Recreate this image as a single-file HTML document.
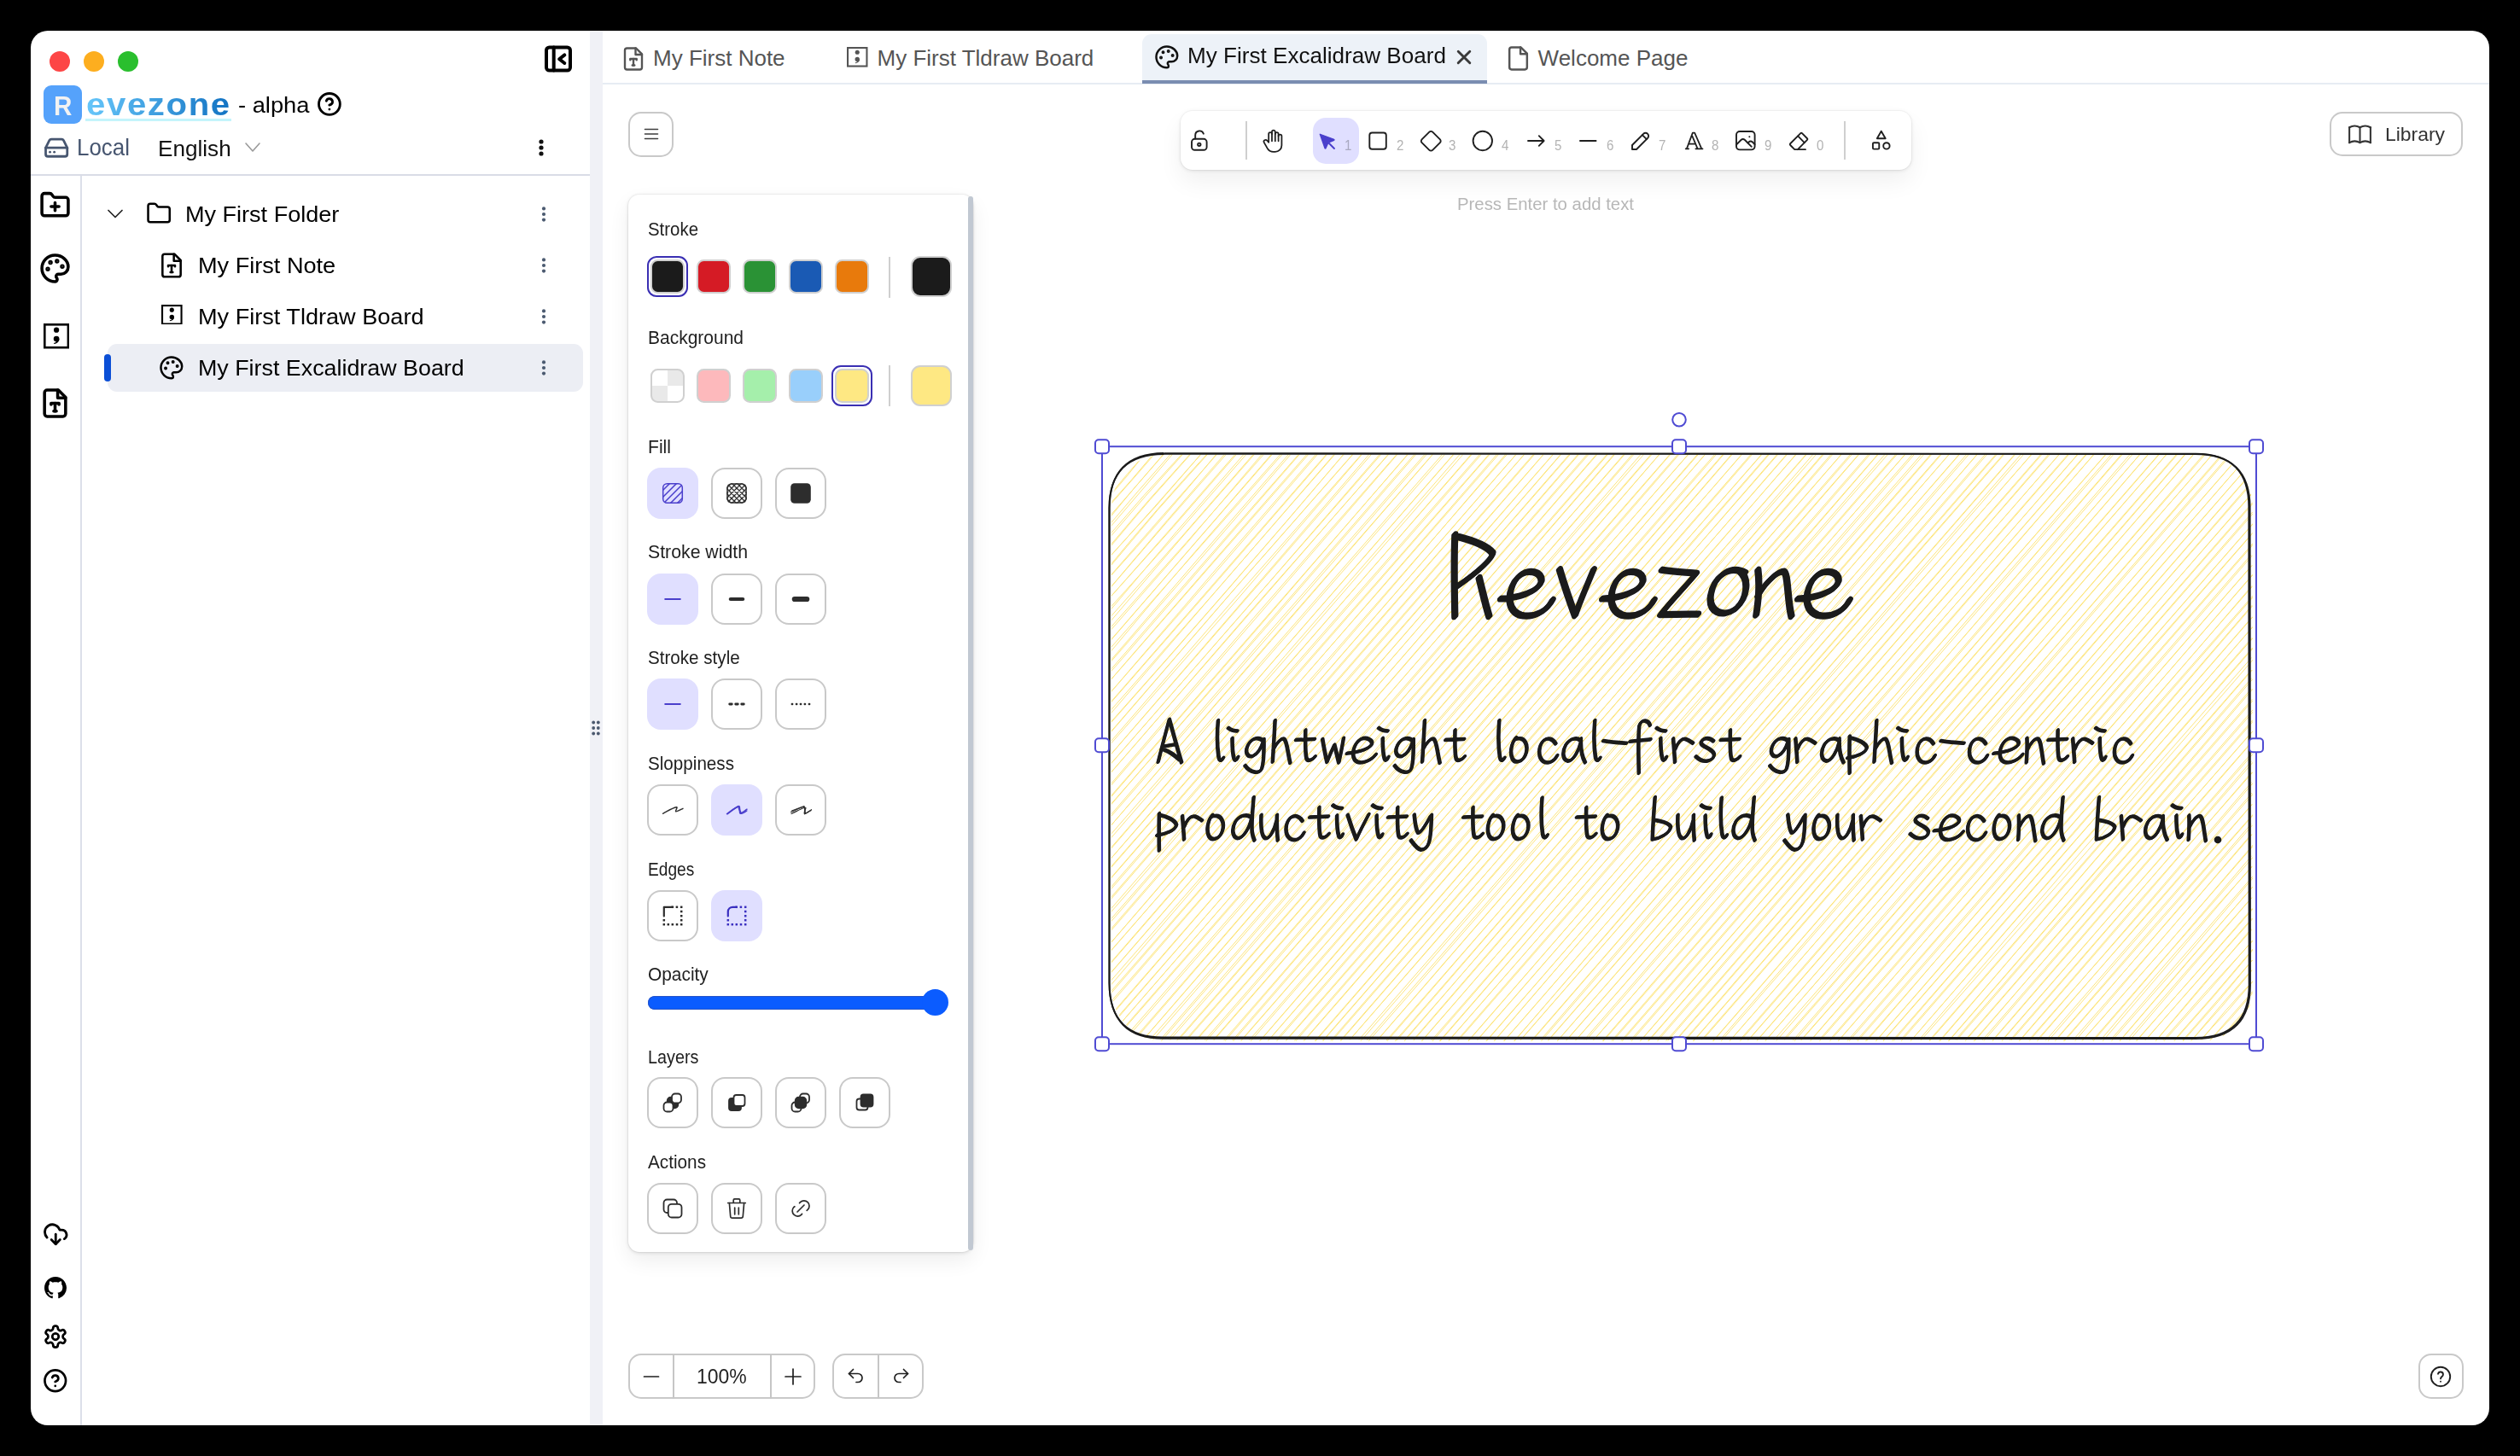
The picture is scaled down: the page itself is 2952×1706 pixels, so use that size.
<!DOCTYPE html>
<html><head><meta charset="utf-8"><title>Revezone</title>
<style>
html,body{margin:0;padding:0;background:#000;}
body{width:2952px;height:1706px;overflow:hidden;position:relative;font-family:"Liberation Sans",sans-serif;}
#win{position:absolute;left:36px;top:36px;width:2880px;height:1634px;border-radius:20px;background:#fff;overflow:hidden;}
#pg{position:absolute;left:-36px;top:-36px;width:2952px;height:1706px;}
.a{position:absolute;display:block;box-sizing:border-box;}
.t{position:absolute;white-space:pre;transform-origin:0 50%;font-family:"Liberation Sans",sans-serif;}
</style></head><body><div id="win"><div id="pg">
<div class="a" style="left:691px;top:36px;width:15px;height:1634px;background:#f0f1f6;"></div>
<div class="a" style="left:58px;top:60px;width:24px;height:24px;border-radius:50%;background:#fd4646;"></div>
<div class="a" style="left:98px;top:60px;width:24px;height:24px;border-radius:50%;background:#fdae1f;"></div>
<div class="a" style="left:138px;top:60px;width:24px;height:24px;border-radius:50%;background:#2abf2e;"></div>
<svg class="a" style="left:636px;top:51px;" width="36" height="36" viewBox="636 51 36 36" fill="none" stroke="#000" stroke-width="4" stroke-linecap="round" stroke-linejoin="round"><rect x="640" y="55.5" width="28" height="27" rx="3.5"/><path d="M648.7 55.5v27"/><path d="M661.3 64.4l-6.1 4.8l6.1 4.8"/></svg>
<div class="a" style="left:51px;top:100px;width:45px;height:45px;border-radius:9px;background:#55a2fb;"></div>
<span class="t" style="left:63.2px;top:109.4px;font-size:30.5px;line-height:30.5px;color:#f2f2f2;font-weight:bold;transform:scaleX(0.9715);">R</span>
<span class="t" id="logo" style="left:100.5px;top:103.8px;font-size:37px;line-height:37px;font-weight:bold;letter-spacing:1.5px;transform:scale(1.085,0.98);background:linear-gradient(90deg,#66c6fa 0%,#1272c2 100%);-webkit-background-clip:text;background-clip:text;color:transparent;">evezone</span>
<div class="a" style="left:100px;top:138.5px;width:171px;height:3.5px;background:#c4f4fb;"></div>
<span class="t" style="left:279.0px;top:110.3px;font-size:26px;line-height:26px;color:#000;transform:scaleX(1.0503);">- alpha</span>
<svg class="a" style="left:371.1px;top:106.8px;" width="29.8" height="29.8" viewBox="0 0 24 24" fill="none" stroke="#000" stroke-width="2.3" stroke-linecap="round" stroke-linejoin="round"><circle cx="12" cy="12" r="10"/><path d="M9.09 9a3 3 0 0 1 5.83 1c0 2-3 3-3 3"/><path d="M12 17h.01"/></svg>
<svg class="a" style="left:50.85px;top:157.85px;" width="30.3" height="30.3" viewBox="0 0 24 24" fill="none" stroke="#475670" stroke-width="2.2" stroke-linecap="round" stroke-linejoin="round"><path d="M22 12H2"/><path d="M5.45 5.11 2 12v6a2 2 0 0 0 2 2h16a2 2 0 0 0 2-2v-6l-3.45-6.89A2 2 0 0 0 16.76 4H7.24a2 2 0 0 0-1.79 1.11z"/><path d="M6 16h.01"/><path d="M10 16h.01"/></svg>
<span class="t" style="left:90.0px;top:159.2px;font-size:27.5px;line-height:27.5px;color:#475670;transform:scaleX(0.9430);">Local</span>
<span class="t" style="left:185.3px;top:161.0px;font-size:26px;line-height:26px;color:#111;transform:scaleX(1.0049);">English</span>
<svg class="a" style="left:286px;top:166px;" width="20" height="14" viewBox="0 0 20 14" fill="none" stroke="#9a9a9a" stroke-width="1.6" stroke-linecap="round" stroke-linejoin="round"><path d="M2 2l8 9l8-9"/></svg>
<svg class="a" style="left:629.4px;top:160.8px;" width="10" height="24" viewBox="-5 -12 10 24" fill="#111" stroke="none" stroke-width="0" stroke-linecap="round" stroke-linejoin="round"><circle cx="0" cy="-7" r="2.6"/><circle cx="0" cy="0" r="2.6"/><circle cx="0" cy="7" r="2.6"/></svg>
<div class="a" style="left:36px;top:204px;width:655px;height:2px;background:#d9dce6;"></div>
<div class="a" style="left:94px;top:206px;width:2px;height:1470px;background:#dcdfe9;"></div>
<svg class="a" style="left:46.0px;top:221.5px;" width="37" height="37" viewBox="0 0 24 24" fill="none" stroke="#000" stroke-width="2.3" stroke-linecap="round" stroke-linejoin="round"><path d="M4 20h16a2 2 0 0 0 2-2V8a2 2 0 0 0-2-2h-7.93a2 2 0 0 1-1.66-.9l-.82-1.2A2 2 0 0 0 7.93 3H4a2 2 0 0 0-2 2v13c0 1.1.9 2 2 2Z"/><path d="M12 10v6"/><path d="M9 13h6"/></svg>
<svg class="a" style="left:46.0px;top:296.0px;" width="37" height="37" viewBox="0 0 24 24" fill="none" stroke="#000" stroke-width="2.3" stroke-linecap="round" stroke-linejoin="round"><circle cx="13.5" cy="6.5" r=".6" fill="#000"/><circle cx="17.5" cy="10.5" r=".6" fill="#000"/><circle cx="8.5" cy="7.5" r=".6" fill="#000"/><circle cx="6.5" cy="12.5" r=".6" fill="#000"/><path d="M12 2C6.5 2 2 6.5 2 12s4.5 10 10 10c.926 0 1.648-.746 1.648-1.688 0-.437-.18-.835-.437-1.125-.29-.289-.438-.652-.438-1.125a1.64 1.64 0 0 1 1.668-1.668h1.996c3.051 0 5.555-2.503 5.555-5.554C21.965 6.012 17.461 2 12 2z"/></svg>
<svg class="a" style="left:50.5px;top:379.4px" width="30.2" height="29.5" viewBox="0 0 30.2 29.5" fill="none" stroke="#000" stroke-width="2.6" stroke-linejoin="miter"><rect x="1.3" y="1.3" width="27.599999999999998" height="26.9"/><circle cx="15.1" cy="7.73" r="3.14" fill="#000" stroke="none"/><circle cx="15.1" cy="18.05" r="3.33" fill="#000" stroke="none"/><path fill="#000" stroke="none" d="M18.43,18.05 C18.43,21.59 15.70,23.66 12.38,24.10 L11.93,22.92 C14.19,22.48 15.10,21.89 14.80,20.57 z"/></svg>
<svg class="a" style="left:46.0px;top:454.0px;" width="37" height="37" viewBox="0 0 24 24" fill="none" stroke="#000" stroke-width="2.3" stroke-linecap="round" stroke-linejoin="round"><path d="M14.5 2H6a2 2 0 0 0-2 2v16a2 2 0 0 0 2 2h12a2 2 0 0 0 2-2V7.5L14.5 2z"/><polyline points="14 2 14 8 20 8"/><path d="M9 13v-1h6v1"/><path d="M11 18h2"/><path d="M12 12v6"/></svg>
<svg class="a" style="left:49.75px;top:1430.75px;" width="30.5" height="30.5" viewBox="0 0 24 24" fill="none" stroke="#000" stroke-width="2.2" stroke-linecap="round" stroke-linejoin="round"><path d="M4 14.899A7 7 0 1 1 15.71 8h1.79a4.5 4.5 0 0 1 2.5 8.242"/><path d="M12 12v9"/><path d="m8 17 4 4 4-4"/></svg>
<svg class="a" style="left:52px;top:1496px;" width="26" height="26" viewBox="0 0 16 16" fill="none" stroke="none" stroke-width="0" stroke-linecap="round" stroke-linejoin="round"><path stroke="none" fill="#000" d="M8 0C3.58 0 0 3.58 0 8c0 3.54 2.29 6.53 5.47 7.59.4.07.55-.17.55-.38 0-.19-.01-.82-.01-1.49-2.01.37-2.53-.49-2.69-.94-.09-.23-.48-.94-.82-1.13-.28-.15-.68-.52-.01-.53.63-.01 1.08.58 1.23.82.72 1.21 1.87.87 2.33.66.07-.52.28-.87.51-1.07-1.78-.2-3.64-.89-3.64-3.95 0-.87.31-1.59.82-2.15-.08-.2-.36-1.02.08-2.12 0 0 .67-.21 2.2.82.64-.18 1.32-.27 2-.27.68 0 1.36.09 2 .27 1.53-1.04 2.2-.82 2.2-.82.44 1.1.16 1.92.08 2.12.51.56.82 1.27.82 2.15 0 3.07-1.87 3.75-3.65 3.95.29.25.54.73.54 1.48 0 1.07-.01 1.93-.01 2.2 0 .21.15.46.55.38A8.013 8.013 0 0 0 16 8c0-4.42-3.58-8-8-8z"/></svg>
<svg class="a" style="left:50.0px;top:1551.0px;" width="30" height="30" viewBox="0 0 24 24" fill="none" stroke="#000" stroke-width="2.2" stroke-linecap="round" stroke-linejoin="round"><path d="M12.22 2h-.44a2 2 0 0 0-2 2v.18a2 2 0 0 1-1 1.73l-.43.25a2 2 0 0 1-2 0l-.15-.08a2 2 0 0 0-2.73.73l-.22.38a2 2 0 0 0 .73 2.73l.15.1a2 2 0 0 1 1 1.72v.51a2 2 0 0 1-1 1.74l-.15.09a2 2 0 0 0-.73 2.73l.22.38a2 2 0 0 0 2.73.73l.15-.08a2 2 0 0 1 2 0l.43.25a2 2 0 0 1 1 1.73V20a2 2 0 0 0 2 2h.44a2 2 0 0 0 2-2v-.18a2 2 0 0 1 1-1.73l.43-.25a2 2 0 0 1 2 0l.15.08a2 2 0 0 0 2.73-.73l.22-.39a2 2 0 0 0-.73-2.73l-.15-.08a2 2 0 0 1-1-1.74v-.5a2 2 0 0 1 1-1.74l.15-.09a2 2 0 0 0 .73-2.73l-.22-.38a2 2 0 0 0-2.73-.73l-.15.08a2 2 0 0 1-2 0l-.43-.25a2 2 0 0 1-1-1.73V4a2 2 0 0 0-2-2z"/><circle cx="12" cy="12" r="3"/></svg>
<svg class="a" style="left:50.25px;top:1602.95px;" width="29.5" height="29.5" viewBox="0 0 24 24" fill="none" stroke="#000" stroke-width="2.2" stroke-linecap="round" stroke-linejoin="round"><circle cx="12" cy="12" r="10"/><path d="M9.09 9a3 3 0 0 1 5.83 1c0 2-3 3-3 3"/><path d="M12 17h.01"/></svg>
<svg class="a" style="left:124px;top:243px;" width="22" height="16" viewBox="0 0 22 16" fill="none" stroke="#222" stroke-width="1.7" stroke-linecap="round" stroke-linejoin="round"><path d="M3 3.5l8 8l8-8"/></svg>
<svg class="a" style="left:170.85px;top:235.35px;" width="30.3" height="30.3" viewBox="0 0 24 24" fill="none" stroke="#000" stroke-width="2" stroke-linecap="round" stroke-linejoin="round"><path d="M4 20h16a2 2 0 0 0 2-2V8a2 2 0 0 0-2-2h-7.93a2 2 0 0 1-1.66-.9l-.82-1.2A2 2 0 0 0 7.93 3H4a2 2 0 0 0-2 2v13c0 1.1.9 2 2 2Z"/></svg>
<span class="t" style="left:216.7px;top:238.0px;font-size:26px;line-height:26px;color:#000;transform:scaleX(1.0401);">My First Folder</span>
<svg class="a" style="left:185.0px;top:294.5px;" width="32" height="32" viewBox="0 0 24 24" fill="none" stroke="#000" stroke-width="1.9" stroke-linecap="round" stroke-linejoin="round"><path d="M14.5 2H6a2 2 0 0 0-2 2v16a2 2 0 0 0 2 2h12a2 2 0 0 0 2-2V7.5L14.5 2z"/><polyline points="14 2 14 8 20 8"/><path d="M9 13v-1h6v1"/><path d="M11 18h2"/><path d="M12 12v6"/></svg>
<span class="t" style="left:231.8px;top:298.0px;font-size:26px;line-height:26px;color:#000;transform:scaleX(1.0429);">My First Note</span>
<svg class="a" style="left:189.1px;top:356.5px" width="24.6" height="23.6" viewBox="0 0 24.6 23.6" fill="none" stroke="#000" stroke-width="2.1" stroke-linejoin="miter"><rect x="1.05" y="1.05" width="22.5" height="21.5"/><circle cx="12.3" cy="6.18" r="2.56" fill="#000" stroke="none"/><circle cx="12.3" cy="14.44" r="2.71" fill="#000" stroke="none"/><path fill="#000" stroke="none" d="M15.01,14.44 C15.01,17.28 12.79,18.93 10.09,19.28 L9.72,18.34 C11.56,17.98 12.30,17.51 12.05,16.49 z"/></svg>
<span class="t" style="left:231.8px;top:358.0px;font-size:26px;line-height:26px;color:#000;transform:scaleX(1.0422);">My First Tldraw Board</span>
<div class="a" style="left:126px;top:403px;width:557px;height:55.5px;border-radius:11px;background:#eceef4;"></div>
<div class="a" style="left:121.7px;top:415px;width:8.2px;height:31.8px;border-radius:4px;background:#0b4fd6;"></div>
<svg class="a" style="left:186.15px;top:416.15px;" width="29.7" height="29.7" viewBox="0 0 24 24" fill="none" stroke="#000" stroke-width="2" stroke-linecap="round" stroke-linejoin="round"><circle cx="13.5" cy="6.5" r=".6" fill="#000"/><circle cx="17.5" cy="10.5" r=".6" fill="#000"/><circle cx="8.5" cy="7.5" r=".6" fill="#000"/><circle cx="6.5" cy="12.5" r=".6" fill="#000"/><path d="M12 2C6.5 2 2 6.5 2 12s4.5 10 10 10c.926 0 1.648-.746 1.648-1.688 0-.437-.18-.835-.437-1.125-.29-.289-.438-.652-.438-1.125a1.64 1.64 0 0 1 1.668-1.668h1.996c3.051 0 5.555-2.503 5.555-5.554C21.965 6.012 17.461 2 12 2z"/></svg>
<span class="t" style="left:231.8px;top:418.3px;font-size:26px;line-height:26px;color:#000;transform:scaleX(1.0322);">My First Excalidraw Board</span>
<svg class="a" style="left:632px;top:239px;" width="10" height="24" viewBox="-5 -12 10 24" fill="#4b5a70" stroke="none" stroke-width="0" stroke-linecap="round" stroke-linejoin="round"><circle cx="0" cy="-6.6" r="2.1"/><circle cx="0" cy="0" r="2.1"/><circle cx="0" cy="6.6" r="2.1"/></svg>
<svg class="a" style="left:632px;top:299px;" width="10" height="24" viewBox="-5 -12 10 24" fill="#4b5a70" stroke="none" stroke-width="0" stroke-linecap="round" stroke-linejoin="round"><circle cx="0" cy="-6.6" r="2.1"/><circle cx="0" cy="0" r="2.1"/><circle cx="0" cy="6.6" r="2.1"/></svg>
<svg class="a" style="left:632px;top:359px;" width="10" height="24" viewBox="-5 -12 10 24" fill="#4b5a70" stroke="none" stroke-width="0" stroke-linecap="round" stroke-linejoin="round"><circle cx="0" cy="-6.6" r="2.1"/><circle cx="0" cy="0" r="2.1"/><circle cx="0" cy="6.6" r="2.1"/></svg>
<svg class="a" style="left:632px;top:419px;" width="10" height="24" viewBox="-5 -12 10 24" fill="#4b5a70" stroke="none" stroke-width="0" stroke-linecap="round" stroke-linejoin="round"><circle cx="0" cy="-6.6" r="2.1"/><circle cx="0" cy="0" r="2.1"/><circle cx="0" cy="6.6" r="2.1"/></svg>
<div class="a" style="left:706px;top:97px;width:2210px;height:2px;background:#e7ecf3;"></div>
<svg class="a" style="left:727.0px;top:53.7px;" width="30" height="30" viewBox="0 0 24 24" fill="none" stroke="#555" stroke-width="1.9" stroke-linecap="round" stroke-linejoin="round"><path d="M14.5 2H6a2 2 0 0 0-2 2v16a2 2 0 0 0 2 2h12a2 2 0 0 0 2-2V7.5L14.5 2z"/><polyline points="14 2 14 8 20 8"/><path d="M9 13v-1h6v1"/><path d="M11 18h2"/><path d="M12 12v6"/></svg>
<span class="t" style="left:765.0px;top:55.2px;font-size:26px;line-height:26px;color:#555;">My First Note</span>
<svg class="a" style="left:992px;top:55px" width="24.5" height="23.6" viewBox="0 0 24.5 23.6" fill="none" stroke="#555" stroke-width="2.1" stroke-linejoin="miter"><rect x="1.05" y="1.05" width="22.4" height="21.5"/><circle cx="12.25" cy="6.18" r="2.55" fill="#555" stroke="none"/><circle cx="12.25" cy="14.44" r="2.70" fill="#555" stroke="none"/><path fill="#555" stroke="none" d="M14.95,14.44 C14.95,17.28 12.74,18.93 10.04,19.28 L9.68,18.34 C11.52,17.98 12.25,17.51 12.01,16.48 z"/></svg>
<span class="t" style="left:1027.5px;top:55.2px;font-size:26px;line-height:26px;color:#555;">My First Tldraw Board</span>
<div class="a" style="left:1338px;top:40px;width:404px;height:58px;border-radius:11px 11px 0 0;background:#edf2f8;border-bottom:4px solid #7a8db1;"></div>
<svg class="a" style="left:1351.65px;top:52.15px;" width="29.7" height="29.7" viewBox="0 0 24 24" fill="none" stroke="#111" stroke-width="2" stroke-linecap="round" stroke-linejoin="round"><circle cx="13.5" cy="6.5" r=".6" fill="#000"/><circle cx="17.5" cy="10.5" r=".6" fill="#000"/><circle cx="8.5" cy="7.5" r=".6" fill="#000"/><circle cx="6.5" cy="12.5" r=".6" fill="#000"/><path d="M12 2C6.5 2 2 6.5 2 12s4.5 10 10 10c.926 0 1.648-.746 1.648-1.688 0-.437-.18-.835-.437-1.125-.29-.289-.438-.652-.438-1.125a1.64 1.64 0 0 1 1.668-1.668h1.996c3.051 0 5.555-2.503 5.555-5.554C21.965 6.012 17.461 2 12 2z"/></svg>
<span class="t" style="left:1390.5px;top:52.4px;font-size:26px;line-height:26px;color:#111;transform:scaleX(1.0034);">My First Excalidraw Board</span>
<svg class="a" style="left:1705px;top:57px;" width="20" height="20" viewBox="0 0 20 20" fill="none" stroke="#3a3a3a" stroke-width="2.9" stroke-linecap="round" stroke-linejoin="round"><path d="M3.200 3.200l13.600 13.600M16.800 3.200l-13.600 13.600"/></svg>
<svg class="a" style="left:1762.5px;top:53.3px;" width="31" height="31" viewBox="0 0 24 24" fill="none" stroke="#555" stroke-width="1.9" stroke-linecap="round" stroke-linejoin="round"><path d="M14.5 2H6a2 2 0 0 0-2 2v16a2 2 0 0 0 2 2h12a2 2 0 0 0 2-2V7.5L14.5 2z"/><polyline points="14 2 14 8 20 8"/></svg>
<span class="t" style="left:1801.6px;top:55.2px;font-size:26px;line-height:26px;color:#555;">Welcome Page</span>
<div class="a" style="left:736.4px;top:130.5px;width:53px;height:53px;border:2px solid #c9c9c9;background:#fff;border-radius:15px;"></div>
<svg class="a" style="left:753px;top:147px;" width="20" height="20" viewBox="0 0 20 20" fill="none" stroke="#3d3d3d" stroke-width="1.6" stroke-linecap="round" stroke-linejoin="round"><path d="M2.5 4.5h15M2.5 10h15M2.5 15.5h15"/></svg>
<div class="a" style="left:2728.7px;top:130.6px;width:156.5px;height:52.5px;border:2px solid #c9c9c9;background:#fff;border-radius:15px;"></div>
<svg class="a" style="left:2747.7px;top:140.5px;" width="33" height="33" viewBox="0 0 24 24" fill="none" stroke="#333" stroke-width="1.5" stroke-linecap="round" stroke-linejoin="round"><path d="M3 19a9 9 0 0 1 9 0a9 9 0 0 1 9 0"/><path d="M3 6a9 9 0 0 1 9 0a9 9 0 0 1 9 0"/><path d="M3 6v13"/><path d="M12 6v13"/><path d="M21 6v13"/></svg>
<span class="t" style="left:2794.0px;top:147.6px;font-size:21.5px;line-height:21.5px;color:#333;transform:scaleX(1.0651);">Library</span>
<div class="a" style="left:1383px;top:130px;width:856px;height:69px;border-radius:14px;background:#fff;box-shadow:0 0 0 1px rgba(0,0,0,.03),0 1px 4px rgba(0,0,0,.10),0 14px 28px rgba(0,0,0,.06);"></div>
<div class="a" style="left:1459.2px;top:142px;width:1.8px;height:44.5px;background:#cfcfcf;"></div>
<div class="a" style="left:2160.3px;top:142px;width:1.8px;height:44.5px;background:#cfcfcf;"></div>
<div class="a" style="left:1538px;top:138px;width:54px;height:54px;border-radius:15px;background:#e0dfff;"></div>
<span class="t" style="left:1574.8px;top:161.7px;font-size:16.5px;line-height:16.5px;color:#a9a9c0;transform:scaleX(0.9153);">1</span>
<span class="t" style="left:1635.8px;top:161.7px;font-size:16.5px;line-height:16.5px;color:#b3b3b3;transform:scaleX(0.9153);">2</span>
<span class="t" style="left:1697.4px;top:161.7px;font-size:16.5px;line-height:16.5px;color:#b3b3b3;transform:scaleX(0.9153);">3</span>
<span class="t" style="left:1759.1px;top:161.7px;font-size:16.5px;line-height:16.5px;color:#b3b3b3;transform:scaleX(0.9153);">4</span>
<span class="t" style="left:1820.6px;top:161.7px;font-size:16.5px;line-height:16.5px;color:#b3b3b3;transform:scaleX(0.9153);">5</span>
<span class="t" style="left:1881.8px;top:161.7px;font-size:16.5px;line-height:16.5px;color:#b3b3b3;transform:scaleX(0.9153);">6</span>
<span class="t" style="left:1943.4px;top:161.7px;font-size:16.5px;line-height:16.5px;color:#b3b3b3;transform:scaleX(0.9153);">7</span>
<span class="t" style="left:2004.8px;top:161.7px;font-size:16.5px;line-height:16.5px;color:#b3b3b3;transform:scaleX(0.9153);">8</span>
<span class="t" style="left:2066.7px;top:161.7px;font-size:16.5px;line-height:16.5px;color:#b3b3b3;transform:scaleX(0.9153);">9</span>
<span class="t" style="left:2127.8px;top:161.7px;font-size:16.5px;line-height:16.5px;color:#b3b3b3;transform:scaleX(0.9153);">0</span>
<span class="t" style="left:1707.0px;top:229.4px;font-size:20.5px;line-height:20.5px;color:#b7b7b7;transform:scaleX(0.9927);">Press Enter to add text</span>
<div class="a" style="left:736.4px;top:1586.3px;width:219px;height:53px;border:2px solid #c9c9c9;background:#fff;border-radius:15px;"></div>
<div class="a" style="left:788.2px;top:1587px;width:1.6px;height:52px;background:#c6c6c6;"></div>
<div class="a" style="left:902.2px;top:1587px;width:1.6px;height:52px;background:#c6c6c6;"></div>
<svg class="a" style="left:752px;top:1603px;" width="22" height="20" viewBox="0 0 22 20" fill="none" stroke="#1f1f1f" stroke-width="1.7" stroke-linecap="round" stroke-linejoin="round"><path d="M2.5 10h17"/></svg>
<svg class="a" style="left:918px;top:1603px;" width="22" height="20" viewBox="0 0 22 20" fill="none" stroke="#1f1f1f" stroke-width="1.7" stroke-linecap="round" stroke-linejoin="round"><path d="M2 10h18M11 1v18"/></svg>
<span class="t" style="left:816.3px;top:1602.1px;font-size:23.5px;line-height:23.5px;color:#1f1f1f;transform:scaleX(0.9766);">100%</span>
<div class="a" style="left:974.5px;top:1586.3px;width:107px;height:53px;border:2px solid #c9c9c9;background:#fff;border-radius:15px;"></div>
<div class="a" style="left:1028.1px;top:1587px;width:1.6px;height:52px;background:#c6c6c6;"></div>
<svg class="a" style="left:991px;top:1600px;" width="24" height="24" viewBox="0 0 24 24" fill="none" stroke="#1f1f1f" stroke-width="1.7" stroke-linecap="round" stroke-linejoin="round"><path d="M8.5 4.5l-5 5l5 5"/><path d="M3.5 9.500h10.5a5 5 0 0 1 0 10h-2"/></svg>
<svg class="a" style="left:1043px;top:1600px;" width="24" height="24" viewBox="0 0 24 24" fill="none" stroke="#1f1f1f" stroke-width="1.7" stroke-linecap="round" stroke-linejoin="round"><path d="M15.5 4.5l5 5l-5 5"/><path d="M20.5 9.500h-10.500a5 5 0 0 0 0 10h2"/></svg>
<div class="a" style="left:2832.5px;top:1586.3px;width:53px;height:53px;border:2px solid #c9c9c9;background:#fff;border-radius:15px;"></div>
<svg class="a" style="left:2845px;top:1599px;" width="28" height="28" viewBox="0 0 28 28" fill="none" stroke="#1f1f1f" stroke-width="1.9" stroke-linecap="round" stroke-linejoin="round"><circle cx="14" cy="14" r="11.2"/><path d="M11 10.800a3 3 0 0 1 5.900 1c0 2.100-2.900 2.400-2.900 4.600"/><path d="M14 19.600v.1"/></svg>
<svg class="a" style="left:1392px;top:150px;" width="26" height="30" viewBox="1392 150 26 30" fill="none" stroke="#1f1f1f" stroke-width="1.9" stroke-linecap="round" stroke-linejoin="round"><rect x="1396" y="162.800" width="17.600" height="13" rx="3.600"/><circle cx="1404.800" cy="169.300" r="1.700"/><path d="M1400.200 162.500v-4.200a5 5 0 0 1 9.700 -1.600"/></svg>
<svg class="a" style="left:1475.75px;top:149.75px;" width="30.5" height="30.5" viewBox="0 0 24 24" fill="none" stroke="#1f1f1f" stroke-width="1.4" stroke-linecap="round" stroke-linejoin="round"><path d="M8 13v-7.500a1.500 1.500 0 0 1 3 0v6.500"/><path d="M11 5.500v-2a1.500 1.500 0 1 1 3 0v8.500"/><path d="M14 5.500a1.500 1.500 0 0 1 3 0v6.500"/><path d="M17 7.500a1.500 1.500 0 0 1 3 0v8.500a6 6 0 0 1 -6 6h-2h.208a6 6 0 0 1 -5.012 -2.700a69.740 69.740 0 0 1 -.196 -.300c-.312 -.479 -1.407 -2.388 -3.286 -5.728a1.500 1.500 0 0 1 .536 -2.022a1.867 1.867 0 0 1 2.280 .280l1.470 1.470"/></svg>
<svg class="a" style="left:1537.8px;top:148.8px;" width="30.5" height="30.5" viewBox="0 0 22 22" fill="#4a3fcc" stroke="#4a3fcc" stroke-width="1.25" stroke-linecap="round" stroke-linejoin="round"><path stroke-width="1" d="M6 6l4.153 11.793a0.365 .365 0 0 0 .331 .207a0.366 .366 0 0 0 .332 -.207l2.184 -4.793l4.787 -1.994a0.355 .355 0 0 0 .213 -.323a0.355 .355 0 0 0 -.213 -.323l-11.787 -4.360z"/><path d="M13.500 13.500l4.500 4.500" stroke-width="1.400"/></svg>
<svg class="a" style="left:1601px;top:152px;" width="26" height="26" viewBox="1601 152 26 26" fill="none" stroke="#1f1f1f" stroke-width="1.9" stroke-linecap="round" stroke-linejoin="round"><rect x="1604.300" y="155.500" width="19.500" height="19.300" rx="3"/></svg>
<svg class="a" style="left:1660.75px;top:149.75px;" width="30.5" height="30.5" viewBox="0 0 24 24" fill="none" stroke="#1f1f1f" stroke-width="1.5" stroke-linecap="round" stroke-linejoin="round"><path d="M10.500 20.400l-6.900 -6.900c-.781 -.781 -.781 -2.219 0 -3l6.900 -6.900c.781 -.781 2.219 -.781 3 0l6.900 6.900c.781 .781 .781 2.219 0 3l-6.900 6.900c-.781 .781 -2.219 .781 -3 0z"/></svg>
<svg class="a" style="left:1722px;top:150px;" width="30" height="30" viewBox="1722 150 30 30" fill="none" stroke="#1f1f1f" stroke-width="1.9" stroke-linecap="round" stroke-linejoin="round"><circle cx="1736.800" cy="165" r="11.200"/></svg>
<svg class="a" style="left:1786px;top:152px;" width="26" height="26" viewBox="1786 152 26 26" fill="none" stroke="#1f1f1f" stroke-width="1.9" stroke-linecap="round" stroke-linejoin="round"><path d="M1790 165h18.500M1802.800 159.200l5.800 5.800l-5.800 5.800"/></svg>
<svg class="a" style="left:1846px;top:152px;" width="28" height="26" viewBox="1846 152 28 26" fill="none" stroke="#1f1f1f" stroke-width="2" stroke-linecap="round" stroke-linejoin="round"><path d="M1851 165h18.500"/></svg>
<svg class="a" style="left:1907px;top:150px;" width="30" height="30" viewBox="0 0 24 24" fill="none" stroke="#1f1f1f" stroke-width="1.55" stroke-linecap="round" stroke-linejoin="round"><path d="M4 20h4l10.500 -10.500a2.828 2.828 0 1 0 -4 -4l-10.500 10.500v4"/><path d="M13.500 6.500l4 4"/></svg>
<svg class="a" style="left:1969.5px;top:151px;" width="28" height="28" viewBox="0 0 24 24" fill="none" stroke="#1f1f1f" stroke-width="1.5" stroke-linecap="round" stroke-linejoin="round"><path d="M4 20h3M14 20h7M6.900 15h6.900M10.200 6.300l5.800 13.700M5 20l6 -16h2l7 16"/></svg>
<svg class="a" style="left:2030px;top:150px;" width="30" height="30" viewBox="2030 150 30 30" fill="none" stroke="#1f1f1f" stroke-width="1.9" stroke-linecap="round" stroke-linejoin="round"><rect x="2034" y="154" width="21.600" height="21.400" rx="4"/><path d="M2049.300 160.300h.1"/><path d="M2034 169.500l5.500 -5.500c1.400 -1.300 3.100 -1.300 4.500 0l7.800 7.800"/><path d="M2047.500 167.500l1 -1c1.400 -1.300 3.100 -1.300 4.500 0l2.600 2.600"/></svg>
<svg class="a" style="left:2092.1px;top:150.7px;" width="29" height="29" viewBox="0 0 24 24" fill="none" stroke="#1f1f1f" stroke-width="1.55" stroke-linecap="round" stroke-linejoin="round"><path d="M19 20h-10.500l-4.210 -4.300a1 1 0 0 1 0 -1.410l10 -10a1 1 0 0 1 1.410 0l5 5a1 1 0 0 1 0 1.410l-9.200 9.300"/><path d="M18 13.300l-6.300 -6.300"/></svg>
<svg class="a" style="left:2189.25px;top:150.25px;" width="29.5" height="29.5" viewBox="0 0 24 24" fill="none" stroke="#1f1f1f" stroke-width="1.55" stroke-linecap="round" stroke-linejoin="round"><path d="M12 3l-4 7h8z"/><circle cx="17" cy="17" r="3"/><rect x="4" y="14" width="6" height="6" rx="1"/></svg>
<div class="a" style="left:735.7px;top:228.3px;width:404px;height:1238.5px;border-radius:13px;background:#fff;box-shadow:0 0 0 1px rgba(0,0,0,.04),0 1px 4px rgba(0,0,0,.12),0 10px 24px rgba(0,0,0,.07);overflow:hidden;"></div>
<div class="a" style="left:1133.8px;top:229.5px;width:5.8px;height:1235px;background:#c1c8d2;border-radius:3px;"></div>
<span class="t" style="left:758.5px;top:258.3px;font-size:22px;line-height:22px;color:#1f1f1f;transform:scaleX(0.9279);">Stroke</span>
<span class="t" style="left:758.5px;top:384.9px;font-size:22px;line-height:22px;color:#1f1f1f;transform:scaleX(0.9539);">Background</span>
<span class="t" style="left:758.5px;top:513.1px;font-size:22px;line-height:22px;color:#1f1f1f;transform:scaleX(0.9607);">Fill</span>
<span class="t" style="left:758.5px;top:636.3px;font-size:22px;line-height:22px;color:#1f1f1f;transform:scaleX(0.9665);">Stroke width</span>
<span class="t" style="left:758.5px;top:759.9px;font-size:22px;line-height:22px;color:#1f1f1f;transform:scaleX(0.9371);">Stroke style</span>
<span class="t" style="left:758.5px;top:884.4px;font-size:22px;line-height:22px;color:#1f1f1f;transform:scaleX(0.9384);">Sloppiness</span>
<span class="t" style="left:758.5px;top:1007.8px;font-size:22px;line-height:22px;color:#1f1f1f;transform:scaleX(0.8704);">Edges</span>
<span class="t" style="left:758.5px;top:1131.4px;font-size:22px;line-height:22px;color:#1f1f1f;transform:scaleX(0.9493);">Opacity</span>
<span class="t" style="left:758.5px;top:1227.6px;font-size:22px;line-height:22px;color:#1f1f1f;transform:scaleX(0.8995);">Layers</span>
<span class="t" style="left:758.5px;top:1351.3px;font-size:22px;line-height:22px;color:#1f1f1f;transform:scaleX(0.9425);">Actions</span>
<div class="a" style="left:758.4px;top:300.4px;width:48px;height:48px;border-radius:11px;border:2.2px solid #3a2fb3;"></div>
<div class="a" style="left:762.4px;top:304.4px;width:40px;height:40px;border-radius:8.5px;background:#1b1b1b;border:2px solid #d0d0d0;"></div>
<div class="a" style="left:816.4px;top:304.4px;width:40px;height:40px;border-radius:8.5px;background:#d51b25;border:2px solid #d0d0d0;"></div>
<div class="a" style="left:870.2px;top:304.4px;width:40px;height:40px;border-radius:8.5px;background:#2a9235;border:2px solid #d0d0d0;"></div>
<div class="a" style="left:924px;top:304.4px;width:40px;height:40px;border-radius:8.5px;background:#1a5ab4;border:2px solid #d0d0d0;"></div>
<div class="a" style="left:978px;top:304.4px;width:40px;height:40px;border-radius:8.5px;background:#e87a0c;border:2px solid #d0d0d0;"></div>
<div class="a" style="left:1041.2px;top:300.5px;width:1.6px;height:48px;background:#cfcfcf;"></div>
<div class="a" style="left:1066.6px;top:300.4px;width:48px;height:48px;border-radius:11px;background:#1b1b1b;border:2px solid #d0d0d0;"></div>
<div class="a" style="left:762.4px;top:432px;width:40px;height:40px;border-radius:8.5px;background:#fff conic-gradient(#e9e9e9 0 25%,#fff 0 50%,#e9e9e9 0 75%,#fff 0);background-size:100% 100%;border:2px solid #d0d0d0;"></div>
<div class="a" style="left:816.4px;top:432px;width:40px;height:40px;border-radius:8.5px;background:#fdb9bc;border:2px solid #d0d0d0;"></div>
<div class="a" style="left:870.2px;top:432px;width:40px;height:40px;border-radius:8.5px;background:#a5efab;border:2px solid #d0d0d0;"></div>
<div class="a" style="left:924px;top:432px;width:40px;height:40px;border-radius:8.5px;background:#99cffb;border:2px solid #d0d0d0;"></div>
<div class="a" style="left:974px;top:428px;width:48px;height:48px;border-radius:11px;border:2.2px solid #3a2fb3;"></div>
<div class="a" style="left:978px;top:432px;width:40px;height:40px;border-radius:8.5px;background:#fee883;border:2px solid #d0d0d0;"></div>
<div class="a" style="left:1041.2px;top:428px;width:1.6px;height:48px;background:#cfcfcf;"></div>
<div class="a" style="left:1066.6px;top:428px;width:48px;height:48px;border-radius:11px;background:#fee883;border:2px solid #d0d0d0;"></div>
<div class="a" style="left:758.2px;top:548px;width:60px;height:60px;border-radius:16px;background:#e0dfff;"></div>
<svg class="a" style="left:773.2px;top:563.0px;" width="30" height="30" viewBox="-15 -15 30 30" fill="none" stroke="#4a3fcc" stroke-width="1.5" stroke-linecap="round" stroke-linejoin="round"><defs><clipPath id="cph"><rect x="-11" y="-11" width="22" height="22" rx="4.500"/></clipPath></defs><rect x="-11.300" y="-11.300" width="22.600" height="22.600" rx="4.800"/><g clip-path="url(#cph)"><path d="M-20 5L5 -20M-16 9L9 -16M-12 13L13 -12M-8 17L17 -8M-4 21L21 -4"/></g></svg>
<div class="a" style="left:833.2px;top:548px;width:60px;height:60px;border:2px solid #c9c9c9;background:#fff;border-radius:16px;"></div>
<svg class="a" style="left:848.2px;top:563.0px;" width="30" height="30" viewBox="-15 -15 30 30" fill="none" stroke="#2d2d2d" stroke-width="1.5" stroke-linecap="round" stroke-linejoin="round"><defs><clipPath id="cpx"><rect x="-11.800" y="-11.800" width="23.600" height="23.600" rx="5.500"/></clipPath></defs><rect x="-11" y="-11" width="22" height="22" rx="5"/><g clip-path="url(#cpx)"><path d="M-24.0 6.0L6.0 -24.0M-24.0 -6.0L6.0 24.0M-21.0 9.0L9.0 -21.0M-21.0 -9.0L9.0 21.0M-18.0 12.0L12.0 -18.0M-18.0 -12.0L12.0 18.0M-15.0 15.0L15.0 -15.0M-15.0 -15.0L15.0 15.0M-12.0 18.0L18.0 -12.0M-12.0 -18.0L18.0 12.0M-9.0 21.0L21.0 -9.0M-9.0 -21.0L21.0 9.0M-6.0 24.0L24.0 -6.0M-6.0 -24.0L24.0 6.0" stroke-width="1.3"/></g></svg>
<div class="a" style="left:908.2px;top:548px;width:60px;height:60px;border:2px solid #c9c9c9;background:#fff;border-radius:16px;"></div>
<svg class="a" style="left:923.2px;top:563.0px;" width="30" height="30" viewBox="-15 -15 30 30" fill="#2d2d2d" stroke="none" stroke-width="0" stroke-linecap="round" stroke-linejoin="round"><rect x="-11.800" y="-11.800" width="23.600" height="23.600" rx="4.500"/></svg>
<div class="a" style="left:758.2px;top:672px;width:60px;height:60px;border-radius:16px;background:#e0dfff;"></div>
<svg class="a" style="left:773.2px;top:687.0px;" width="30" height="30" viewBox="-15 -15 30 30" fill="none" stroke="#4a3fcc" stroke-width="2" stroke-linecap="round" stroke-linejoin="round"><path d="M-8.800 0h17.600"/></svg>
<div class="a" style="left:833.2px;top:672px;width:60px;height:60px;border:2px solid #c9c9c9;background:#fff;border-radius:16px;"></div>
<svg class="a" style="left:848.2px;top:687.0px;" width="30" height="30" viewBox="-15 -15 30 30" fill="none" stroke="#2d2d2d" stroke-width="4.2" stroke-linecap="round" stroke-linejoin="round"><path d="M-7.200 0h14.400"/></svg>
<div class="a" style="left:908.2px;top:672px;width:60px;height:60px;border:2px solid #c9c9c9;background:#fff;border-radius:16px;"></div>
<svg class="a" style="left:923.2px;top:687.0px;" width="30" height="30" viewBox="-15 -15 30 30" fill="none" stroke="#2d2d2d" stroke-width="6.2" stroke-linecap="round" stroke-linejoin="round"><path d="M-7.200 0h14.400"/></svg>
<div class="a" style="left:758.2px;top:795px;width:60px;height:60px;border-radius:16px;background:#e0dfff;"></div>
<svg class="a" style="left:773.2px;top:810.0px;" width="30" height="30" viewBox="-15 -15 30 30" fill="none" stroke="#4a3fcc" stroke-width="2" stroke-linecap="round" stroke-linejoin="round"><path d="M-8.800 0h17.600"/></svg>
<div class="a" style="left:833.2px;top:795px;width:60px;height:60px;border:2px solid #c9c9c9;background:#fff;border-radius:16px;"></div>
<svg class="a" style="left:848.2px;top:810.0px;" width="30" height="30" viewBox="-15 -15 30 30" fill="none" stroke="#2d2d2d" stroke-width="2.8" stroke-linecap="round" stroke-linejoin="round"><path d="M-8.300 0h2.600M-1.300 0h2.600M5.700 0h2.600"/></svg>
<div class="a" style="left:908.2px;top:795px;width:60px;height:60px;border:2px solid #c9c9c9;background:#fff;border-radius:16px;"></div>
<svg class="a" style="left:923.2px;top:810.0px;" width="30" height="30" viewBox="-15 -15 30 30" fill="none" stroke="#2d2d2d" stroke-width="2.4" stroke-linecap="round" stroke-linejoin="round"><path d="M-10.200 0h.4M-5.100 0h.4M-.2 0h.4M4.700 0h.4M9.800 0h.4"/></svg>
<div class="a" style="left:758.2px;top:919px;width:60px;height:60px;border:2px solid #c9c9c9;background:#fff;border-radius:16px;"></div>
<svg class="a" style="left:773.2px;top:934.0px;" width="30" height="30" viewBox="-15 -15 30 30" fill="none" stroke="#2d2d2d" stroke-width="1.4" stroke-linecap="round" stroke-linejoin="round"><path d="M-11.500 4.300C-6 1.500 -1 -2.300 4.500 -3.300C6.500 -3.600 3 0.800 3.500 1.700C4.500 2.700 9 -0.200 12 -1.700"/></svg>
<div class="a" style="left:833.2px;top:919px;width:60px;height:60px;border-radius:16px;background:#e0dfff;"></div>
<svg class="a" style="left:848.2px;top:934.0px;" width="30" height="30" viewBox="-15 -15 30 30" fill="none" stroke="#4a3fcc" stroke-width="1.5" stroke-linecap="round" stroke-linejoin="round"><path d="M-11.500 4.500C-7 1.500 -3 -1.800 1.500 -4C4 -5 3.500 3 4.500 3.500C6 4.500 10 0.500 12 -0.800"/><path d="M-11 4.800C-6 1 -2 -2.500 2.500 -4.500C4.500 -4.500 2.500 2 4 4C6 5 10.500 2 11.800 1"/><path d="M2 -3.500C3 0 3.500 2 5.500 3.500"/></svg>
<div class="a" style="left:908.2px;top:919px;width:60px;height:60px;border:2px solid #c9c9c9;background:#fff;border-radius:16px;"></div>
<svg class="a" style="left:923.2px;top:934.0px;" width="30" height="30" viewBox="-15 -15 30 30" fill="none" stroke="#2d2d2d" stroke-width="1.2" stroke-linecap="round" stroke-linejoin="round"><path d="M-11.500 2.500C-6 0.500 -1 -3 3.500 -3.500C6.500 -3.500 3 3 5.500 4C7 4 10 1.500 12.500 -0.300"/><path d="M-11 4.500C-7 3 -1 -1 4 -2.500C9 -4 2.500 2 4.500 4.800C7 3.500 10 1.500 12 0.800"/><path d="M-10.500 1L4 -4.500L5.500 4.500"/></svg>
<div class="a" style="left:758.2px;top:1043px;width:60px;height:60px;border:2px solid #c9c9c9;background:#fff;border-radius:16px;"></div>
<svg class="a" style="left:773.2px;top:1058.0px;" width="30" height="30" viewBox="-15 -15 30 30" fill="none" stroke="#2d2d2d" stroke-width="2.2" stroke-linecap="round" stroke-linejoin="round"><g stroke-width="2.500" stroke-linecap="square"><path d="M-0.3 -10.2h.01"/><path d="M4.9 -10.2h.01"/><path d="M10.2 -10.2h.01"/><path d="M10.2 -5h.01"/><path d="M10.2 0.2h.01"/><path d="M10.2 5.2h.01"/><path d="M10.2 10.2h.01"/><path d="M5 10.2h.01"/><path d="M-0.2 10.2h.01"/><path d="M-5.2 10.2h.01"/><path d="M-10.2 10.2h.01"/><path d="M-10.2 5.2h.01"/></g><path d="M-10.200 0.500v-10.700h10.400"/></svg>
<div class="a" style="left:833.2px;top:1043px;width:60px;height:60px;border-radius:16px;background:#e0dfff;"></div>
<svg class="a" style="left:848.2px;top:1058.0px;" width="30" height="30" viewBox="-15 -15 30 30" fill="none" stroke="#3a2fc0" stroke-width="2.2" stroke-linecap="round" stroke-linejoin="round"><g stroke-width="2.500" stroke-linecap="square"><path d="M-0.3 -10.2h.01"/><path d="M4.9 -10.2h.01"/><path d="M10.2 -10.2h.01"/><path d="M10.2 -5h.01"/><path d="M10.2 0.2h.01"/><path d="M10.2 5.2h.01"/><path d="M10.2 10.2h.01"/><path d="M5 10.2h.01"/><path d="M-0.2 10.2h.01"/><path d="M-5.2 10.2h.01"/><path d="M-10.2 10.2h.01"/><path d="M-10.2 5.2h.01"/></g><path d="M-10.200 0.500v-5.500a5.500 5.500 0 0 1 5.500 -5.200h4.500"/></svg>
<div class="a" style="left:758.5px;top:1167.2px;width:350px;height:15.5px;border-radius:8px;background:#0b5cff;box-shadow:inset 0 0 0 1px #2553c9;"></div>
<div class="a" style="left:1079.5px;top:1159.3px;width:31px;height:31px;border-radius:50%;background:#0b5cff;"></div>
<div class="a" style="left:758.2px;top:1262px;width:60px;height:60px;border:2px solid #c9c9c9;background:#fff;border-radius:16px;"></div>
<svg class="a" style="left:773.2px;top:1277.0px;" width="30" height="30" viewBox="-15 -15 30 30" fill="none" stroke="#2d2d2d" stroke-width="1.8" stroke-linecap="round" stroke-linejoin="round"><rect x="-6.3" y="-6.3" width="12.6" height="12.6" rx="4" fill="#2d2d2d"/><rect x="-1" y="-10.5" width="11" height="11" rx="3.8" fill="#fff"/><rect x="-10.5" y="-0.5" width="11" height="11" rx="3.8" fill="#fff"/></svg>
<div class="a" style="left:833.2px;top:1262px;width:60px;height:60px;border:2px solid #c9c9c9;background:#fff;border-radius:16px;"></div>
<svg class="a" style="left:848.2px;top:1277.0px;" width="30" height="30" viewBox="-15 -15 30 30" fill="none" stroke="#2d2d2d" stroke-width="1.8" stroke-linecap="round" stroke-linejoin="round"><rect x="-9" y="-5" width="14" height="14" rx="3" fill="#2d2d2d"/><rect x="-3.5" y="-9" width="13" height="13" rx="3" fill="#fff"/></svg>
<div class="a" style="left:908.2px;top:1262px;width:60px;height:60px;border:2px solid #c9c9c9;background:#fff;border-radius:16px;"></div>
<svg class="a" style="left:923.2px;top:1277.0px;" width="30" height="30" viewBox="-15 -15 30 30" fill="none" stroke="#2d2d2d" stroke-width="1.8" stroke-linecap="round" stroke-linejoin="round"><rect x="-1" y="-10.5" width="11" height="11" rx="3.8" fill="#fff"/><rect x="-10.5" y="-0.5" width="11" height="11" rx="3.8" fill="#fff"/><rect x="-6.3" y="-6.3" width="12.6" height="12.6" rx="4" fill="#2d2d2d"/></svg>
<div class="a" style="left:983.2px;top:1262px;width:60px;height:60px;border:2px solid #c9c9c9;background:#fff;border-radius:16px;"></div>
<svg class="a" style="left:998.2px;top:1277.0px;" width="30" height="30" viewBox="-15 -15 30 30" fill="none" stroke="#2d2d2d" stroke-width="1.8" stroke-linecap="round" stroke-linejoin="round"><rect x="-9.5" y="-4.5" width="13" height="13" rx="3" fill="#fff"/><rect x="-4.5" y="-9.5" width="14" height="14" rx="3" fill="#2d2d2d"/></svg>
<div class="a" style="left:758.2px;top:1386px;width:60px;height:60px;border:2px solid #c9c9c9;background:#fff;border-radius:16px;"></div>
<svg class="a" style="left:773.2px;top:1401.0px;" width="30" height="30" viewBox="-15 -15 30 30" fill="none" stroke="#2d2d2d" stroke-width="1.8" stroke-linecap="round" stroke-linejoin="round"><rect x="-10.500" y="-10.500" width="15.500" height="15.500" rx="4" fill="#fff"/><rect x="-5.200" y="-5.200" width="15.700" height="15.700" rx="4" fill="#fff"/></svg>
<div class="a" style="left:833.2px;top:1386px;width:60px;height:60px;border:2px solid #c9c9c9;background:#fff;border-radius:16px;"></div>
<svg class="a" style="left:848.2px;top:1401.0px;" width="30" height="30" viewBox="-15 -15 30 30" fill="none" stroke="#2d2d2d" stroke-width="1.7" stroke-linecap="round" stroke-linejoin="round"><path d="M-10.300 -6.500h20.600"/><path d="M-3.800 -6.800v-3a1.300 1.300 0 0 1 1.300 -1.300h5a1.300 1.300 0 0 1 1.300 1.300v3"/><path d="M-8.600 -6.300l1.300 15.500a2.200 2.200 0 0 0 2.200 2h10.200a2.200 2.200 0 0 0 2.200 -2l1.300 -15.500"/><path d="M-2.300 -1v7.800M2.300 -1v7.800"/></svg>
<div class="a" style="left:908.2px;top:1386px;width:60px;height:60px;border:2px solid #c9c9c9;background:#fff;border-radius:16px;"></div>
<svg class="a" style="left:923.2px;top:1401.0px;" width="30" height="30" viewBox="-15 -15 30 30" fill="none" stroke="#2d2d2d" stroke-width="1.7" stroke-linecap="round" stroke-linejoin="round"><path d="M-4 4l8 -8"/><path d="M-1.500 -6.300l.9 -1.100a6.200 6.200 0 0 1 8.800 8.800l-1.100 .9"/><path d="M1.500 6.300l-.8 1.100a6.300 6.300 0 0 1 -8.900 -8.900l1.100 -.8"/></svg>
<svg class="a" style="left:1240px;top:460px" width="1460" height="820" viewBox="1240 460 1460 820"><defs><clipPath id="rc"><rect x="1302.0" y="532.5" width="1337.0" height="687.5" rx="62"/></clipPath></defs><g clip-path="url(#rc)"><path d="M1299.0 542.6Q1304.9 535.8 1310.6 530.2M1298.2 543.7Q1301.6 535.7 1308.7 531.3M1299.3 556.9Q1310.0 545.7 1319.6 530.7M1299.7 555.6Q1312.5 541.9 1322.1 530.1M1298.4 566.9Q1313.2 550.1 1330.7 532.4M1299.9 567.7Q1313.7 547.7 1331.4 530.2M1300.0 580.1Q1320.5 555.0 1341.3 531.8M1300.4 580.9Q1320.9 557.9 1341.1 531.7M1300.2 591.8Q1326.7 562.2 1353.9 530.4M1298.5 592.4Q1326.0 562.5 1351.1 532.0M1300.6 604.1Q1332.5 567.8 1363.7 531.8M1300.5 606.0Q1329.8 569.9 1363.0 532.0M1299.9 618.3Q1336.8 575.3 1374.7 530.9M1298.1 616.7Q1333.4 574.7 1372.7 530.4M1298.4 628.3Q1339.3 580.2 1384.0 532.6M1299.6 630.2Q1341.5 581.0 1385.3 532.6M1299.1 642.4Q1346.3 585.2 1396.3 530.5M1298.7 641.2Q1344.8 585.6 1395.2 530.8M1299.1 653.6Q1353.1 593.4 1406.9 532.1M1300.0 652.1Q1355.0 593.5 1406.7 532.3M1299.2 665.3Q1355.1 596.7 1414.9 531.9M1298.6 664.6Q1354.9 595.9 1415.6 530.2M1298.3 677.4Q1362.3 603.5 1425.3 532.6M1298.8 677.4Q1364.1 606.0 1426.3 530.4M1299.4 690.0Q1367.0 609.1 1436.1 530.3M1300.5 689.0Q1368.3 609.4 1435.9 532.9M1299.6 700.8Q1375.4 617.7 1448.0 532.9M1298.8 701.8Q1373.0 618.3 1446.9 532.3M1299.0 713.6Q1380.8 624.6 1459.4 533.0M1300.5 715.1Q1378.4 621.3 1457.7 531.6M1298.1 725.9Q1385.2 628.8 1468.4 532.1M1300.8 728.1Q1384.4 628.4 1470.5 531.1M1298.6 737.9Q1390.8 635.2 1480.1 532.7M1300.0 739.7Q1391.0 637.1 1478.5 532.0M1300.3 750.9Q1394.1 643.0 1489.3 532.4M1300.9 750.7Q1396.4 640.3 1490.0 532.8M1298.4 762.1Q1398.7 648.7 1502.1 532.4M1300.9 763.7Q1399.1 645.5 1500.5 531.6M1300.9 775.8Q1406.0 656.0 1511.6 532.8M1300.5 774.5Q1404.5 653.1 1510.8 530.9M1298.8 787.3Q1409.2 659.8 1521.0 532.7M1299.8 788.8Q1410.8 660.9 1521.9 532.8M1299.6 798.3Q1413.9 665.8 1532.5 530.5M1298.5 799.7Q1415.2 665.8 1533.4 531.7M1299.7 812.8Q1419.8 671.3 1542.1 531.7M1300.3 812.0Q1423.7 671.9 1543.5 532.3M1299.8 824.2Q1426.7 678.3 1553.9 532.1M1299.4 825.5Q1428.9 678.0 1554.5 532.6M1299.7 837.7Q1430.9 683.8 1565.5 530.4M1298.2 835.6Q1432.0 685.5 1563.2 532.0M1298.5 849.2Q1438.7 691.9 1575.6 530.4M1298.7 849.9Q1438.9 692.1 1574.8 531.5M1298.5 860.5Q1440.8 695.0 1585.7 531.0M1300.2 859.3Q1440.9 694.6 1585.9 531.3M1299.9 873.0Q1448.7 705.0 1595.0 533.0M1298.3 872.2Q1445.6 700.7 1594.9 532.3M1299.3 886.4Q1452.0 710.4 1607.9 530.8M1299.7 885.7Q1453.5 707.6 1605.7 530.2M1298.2 898.6Q1456.2 717.1 1617.9 532.4M1298.2 898.4Q1458.0 716.6 1617.4 531.0M1298.8 908.4Q1461.8 718.1 1628.2 530.7M1298.2 908.6Q1464.0 718.8 1627.5 530.9M1299.5 920.7Q1467.8 723.3 1638.2 530.1M1300.2 921.9Q1470.9 724.9 1637.8 531.4M1300.5 933.7Q1474.4 733.1 1649.3 532.5M1300.1 935.4Q1475.4 734.5 1648.8 532.5M1299.2 945.6Q1477.0 739.1 1658.6 530.4M1298.8 945.1Q1480.3 739.6 1658.7 532.5M1298.8 957.5Q1482.9 744.2 1669.9 531.4M1298.8 959.7Q1484.2 747.7 1671.9 531.6M1298.9 970.1Q1489.2 750.6 1679.6 531.1M1298.6 970.5Q1487.3 750.2 1679.6 530.8M1298.1 981.2Q1495.0 756.1 1691.1 530.7M1300.3 983.2Q1495.8 757.1 1692.4 532.6M1301.0 993.8Q1500.0 764.4 1703.0 531.9M1300.7 995.3Q1500.3 764.0 1703.0 532.4M1299.5 1008.1Q1507.0 772.0 1713.8 532.5M1300.0 1007.6Q1504.5 768.3 1712.1 530.1M1298.3 1020.3Q1511.6 776.9 1723.7 531.9M1299.5 1017.8Q1511.9 775.2 1724.4 532.2M1300.0 1030.2Q1515.5 779.4 1734.8 530.8M1300.2 1030.6Q1517.5 781.2 1734.8 532.9M1299.4 1044.2Q1523.1 786.2 1745.5 531.9M1298.4 1042.9Q1522.2 784.8 1745.4 530.9M1298.2 1055.1Q1527.8 792.7 1755.8 532.1M1299.5 1055.7Q1529.1 791.7 1755.2 530.4M1300.9 1069.3Q1534.1 802.4 1764.5 531.4M1299.3 1067.3Q1530.9 800.4 1765.0 532.8M1298.4 1080.3Q1539.6 805.4 1777.9 530.4M1300.7 1080.8Q1538.1 804.7 1775.7 532.7M1298.0 1092.4Q1540.9 811.0 1787.0 530.9M1298.9 1093.4Q1543.8 811.2 1785.6 532.3M1300.8 1105.3Q1549.3 817.6 1798.9 530.9M1301.0 1104.9Q1548.2 816.1 1797.3 531.3M1298.3 1117.8Q1551.9 824.3 1807.7 532.8M1299.5 1115.9Q1555.4 825.7 1807.9 532.9M1299.9 1130.2Q1561.0 829.0 1820.2 531.6M1300.2 1128.9Q1559.0 828.4 1819.7 531.9M1300.8 1140.1Q1564.2 836.6 1829.4 531.0M1300.9 1140.5Q1565.7 835.2 1830.0 530.9M1298.5 1152.4Q1568.9 841.3 1839.2 532.7M1300.7 1154.9Q1569.0 840.9 1840.0 530.4M1299.0 1164.4Q1574.8 849.3 1849.9 530.8M1300.2 1165.3Q1574.8 847.7 1850.4 531.6M1298.2 1177.1Q1580.5 854.3 1862.7 530.4M1300.6 1176.9Q1580.2 853.6 1860.6 530.7M1300.9 1191.0Q1584.9 861.5 1873.0 530.1M1300.7 1189.9Q1585.9 861.8 1872.2 530.0M1300.5 1203.2Q1590.5 865.5 1883.9 530.7M1299.6 1202.7Q1592.3 868.6 1883.8 532.2M1299.4 1214.5Q1594.4 875.3 1891.7 532.3M1299.9 1213.8Q1596.6 873.1 1892.0 530.8M1304.5 1218.2Q1603.6 873.8 1903.8 531.7M1305.9 1218.0Q1606.5 875.3 1903.1 531.4M1317.4 1219.4Q1617.5 876.0 1913.5 530.7M1315.7 1218.1Q1614.6 874.0 1914.3 532.0M1327.3 1220.8Q1625.0 875.1 1924.1 530.1M1327.4 1218.6Q1626.6 874.1 1925.8 532.2M1338.8 1218.9Q1636.4 876.0 1936.5 530.7M1336.8 1220.9Q1634.9 875.3 1935.5 530.6M1348.5 1220.8Q1645.5 878.1 1945.0 531.2M1347.0 1218.2Q1647.6 876.4 1944.8 531.2M1359.3 1221.0Q1657.3 877.9 1958.0 531.0M1359.4 1218.1Q1657.7 873.9 1957.2 531.1M1368.2 1218.0Q1669.4 872.9 1966.6 531.1M1370.6 1218.6Q1670.2 875.2 1966.9 532.5M1378.5 1219.4Q1676.7 875.5 1977.5 532.8M1381.0 1218.1Q1680.5 873.2 1977.6 532.4M1389.0 1218.2Q1690.5 876.2 1989.8 530.8M1390.0 1218.8Q1688.9 876.3 1989.9 531.9M1400.5 1218.8Q1700.9 876.1 1997.6 532.3M1402.4 1218.1Q1702.3 876.7 1998.3 531.4M1411.3 1218.8Q1712.3 873.7 2009.5 531.5M1412.5 1220.2Q1712.1 875.5 2010.7 532.3M1421.7 1219.1Q1720.1 875.8 2021.2 530.2M1421.5 1218.2Q1719.4 877.0 2018.9 531.7M1434.0 1221.0Q1730.3 875.6 2030.2 530.3M1433.5 1219.3Q1732.3 876.1 2030.1 531.3M1444.2 1220.5Q1744.6 874.5 2042.0 530.4M1443.6 1219.1Q1741.8 873.7 2042.2 530.6M1453.0 1220.7Q1752.2 878.0 2052.3 531.0M1454.1 1218.7Q1755.7 873.6 2053.0 532.0M1464.6 1220.5Q1762.1 875.7 2063.7 532.7M1463.5 1218.6Q1765.7 874.6 2064.1 531.7M1476.3 1219.3Q1776.4 874.1 2072.6 532.3M1475.5 1219.9Q1772.4 874.2 2072.5 531.1M1485.1 1219.8Q1782.6 874.4 2084.4 530.6M1486.4 1218.6Q1786.2 874.8 2083.3 530.6M1495.1 1218.3Q1795.3 873.2 2094.2 531.7M1495.4 1220.1Q1794.0 877.5 2094.2 530.8M1506.5 1219.7Q1807.2 877.7 2104.7 531.2M1506.6 1218.6Q1804.0 876.4 2105.8 530.6M1517.4 1220.5Q1816.2 875.1 2115.4 532.6M1516.2 1219.7Q1814.3 876.7 2116.1 532.7M1527.9 1219.5Q1826.6 877.1 2125.2 530.8M1527.1 1219.5Q1825.8 874.5 2127.2 532.9M1540.2 1220.9Q1840.4 875.1 2136.9 530.2M1540.1 1219.9Q1840.2 873.9 2137.9 530.5M1549.2 1220.5Q1847.6 875.1 2148.5 530.5M1549.5 1219.2Q1848.9 876.7 2146.4 530.7M1558.7 1219.7Q1860.3 873.2 2158.9 530.1M1560.3 1219.7Q1859.1 875.6 2158.5 530.9M1570.4 1220.0Q1867.4 876.2 2168.5 531.3M1570.6 1218.7Q1869.9 874.1 2169.5 532.3M1581.2 1218.3Q1877.9 874.6 2178.2 531.3M1581.3 1218.1Q1881.5 875.4 2179.7 530.2M1591.9 1218.2Q1892.9 873.0 2189.9 531.1M1592.9 1221.0Q1890.4 878.8 2190.6 532.4M1602.4 1220.9Q1903.4 877.6 2201.8 530.5M1601.1 1219.1Q1903.0 873.8 2201.3 530.5M1614.0 1218.4Q1911.3 874.6 2211.1 532.8M1613.1 1219.0Q1909.9 876.7 2209.7 530.5M1624.2 1220.7Q1920.8 876.7 2220.7 532.4M1624.0 1219.1Q1923.8 877.1 2222.8 531.7M1633.1 1221.0Q1934.2 875.0 2232.7 531.2M1635.7 1219.7Q1933.5 874.6 2231.9 532.3M1645.6 1218.1Q1945.3 876.6 2243.9 530.8M1645.1 1220.0Q1941.7 873.5 2242.3 530.0M1655.8 1219.3Q1953.0 874.8 2253.5 532.7M1655.9 1218.1Q1952.2 873.9 2252.0 531.1M1665.2 1219.8Q1965.3 875.1 2264.4 530.6M1664.9 1220.8Q1962.4 876.2 2263.3 530.4M1677.8 1220.3Q1973.9 876.2 2274.4 530.8M1676.8 1219.1Q1977.9 876.2 2275.1 531.3M1686.5 1220.7Q1984.8 875.0 2283.9 531.6M1685.9 1220.3Q1986.8 874.4 2283.8 531.7M1696.9 1219.8Q1997.8 874.4 2295.9 531.9M1697.3 1218.9Q1997.2 876.7 2294.6 532.7M1707.0 1220.5Q2008.2 875.8 2307.2 531.4M1707.6 1218.3Q2005.9 875.3 2305.7 530.1M1719.6 1220.5Q2018.9 875.4 2317.7 530.8M1719.9 1219.6Q2020.2 874.5 2316.4 531.9M1730.8 1218.0Q2030.0 876.3 2327.0 530.7M1730.4 1219.0Q2028.5 876.8 2328.9 531.0M1740.6 1220.1Q2039.6 878.0 2338.8 532.9M1740.8 1220.6Q2039.8 875.5 2338.1 532.2M1750.0 1219.9Q2047.2 874.2 2347.6 532.7M1749.7 1220.8Q2047.0 873.6 2348.4 530.4M1762.0 1219.9Q2059.1 876.5 2360.1 532.2M1761.0 1220.5Q2058.8 878.2 2360.5 532.7M1773.3 1220.8Q2069.4 873.7 2368.9 530.6M1773.1 1220.4Q2072.4 875.5 2370.5 532.5M1781.4 1218.3Q2080.7 874.1 2381.5 530.6M1781.2 1218.8Q2080.1 874.7 2380.1 532.1M1794.6 1219.5Q2091.4 875.3 2392.4 531.9M1793.1 1220.3Q2092.1 875.0 2390.9 532.1M1804.9 1218.3Q2101.7 873.1 2402.9 530.5M1804.6 1220.9Q2102.5 877.5 2400.4 531.5M1813.5 1219.5Q2111.7 877.9 2412.1 532.5M1813.8 1218.6Q2111.7 875.7 2413.1 531.5M1823.8 1220.4Q2124.3 875.7 2423.7 532.4M1824.7 1219.2Q2126.2 872.6 2424.3 530.3M1834.8 1218.8Q2134.3 876.8 2434.9 531.5M1834.8 1219.4Q2135.4 876.5 2433.8 532.3M1845.8 1219.0Q2145.2 876.8 2443.3 532.5M1845.3 1219.3Q2143.5 875.4 2445.1 531.7M1858.0 1218.7Q2156.9 876.3 2454.0 530.9M1855.8 1218.5Q2155.1 873.2 2454.2 531.0M1866.9 1218.6Q2165.2 877.4 2466.9 532.2M1866.2 1219.2Q2167.6 875.5 2467.0 532.4M1877.1 1219.9Q2175.5 873.2 2474.9 530.6M1877.7 1220.4Q2177.8 875.8 2476.7 531.5M1887.6 1219.8Q2188.8 875.7 2486.4 532.2M1888.9 1220.2Q2188.6 877.1 2486.5 530.7M1900.1 1220.1Q2199.8 875.9 2498.4 532.0M1898.7 1219.9Q2198.6 876.5 2496.1 531.3M1910.2 1218.8Q2209.5 874.7 2507.7 531.4M1910.4 1220.8Q2209.9 875.9 2507.0 532.0M1920.4 1220.9Q2217.3 877.5 2517.1 531.6M1921.8 1219.6Q2219.7 876.6 2517.3 531.7M1931.1 1219.9Q2230.2 877.7 2530.1 531.6M1930.2 1220.1Q2227.8 878.3 2528.8 532.3M1941.2 1218.2Q2238.0 874.3 2539.0 531.2M1941.4 1220.1Q2239.1 876.5 2539.3 530.8M1953.6 1219.6Q2251.0 874.7 2549.5 532.4M1951.1 1220.3Q2251.1 876.4 2551.2 531.9M1962.0 1220.9Q2262.6 877.8 2560.5 531.9M1962.7 1218.9Q2263.4 874.0 2561.1 530.4M1974.5 1218.8Q2272.5 873.4 2571.1 530.8M1972.0 1220.2Q2270.5 875.4 2570.9 530.7M1983.8 1219.9Q2285.1 877.1 2582.6 531.1M1982.7 1220.5Q2281.4 877.9 2583.3 532.4M1995.0 1218.0Q2293.8 874.4 2591.2 532.9M1993.4 1218.4Q2292.0 873.9 2591.9 532.3M2006.5 1220.4Q2304.9 877.8 2602.3 532.7M2005.7 1220.7Q2303.6 877.4 2604.2 532.5M2015.9 1220.2Q2315.1 875.4 2613.7 532.6M2015.0 1218.4Q2314.3 872.7 2613.9 530.2M2026.4 1219.5Q2323.4 877.5 2624.6 532.6M2026.3 1219.7Q2325.1 875.7 2625.0 532.5M2038.4 1218.2Q2334.9 875.5 2635.5 531.9M2037.6 1220.8Q2336.1 876.8 2634.6 532.9M2048.8 1218.1Q2343.3 880.7 2639.2 540.2M2047.2 1219.4Q2341.6 879.7 2638.6 540.6M2058.0 1219.7Q2350.2 885.1 2639.5 551.4M2058.3 1218.8Q2349.1 887.4 2638.5 553.4M2068.3 1219.0Q2353.7 892.9 2637.9 564.4M2067.5 1220.2Q2351.6 891.4 2639.7 564.3M2078.0 1218.6Q2359.6 898.9 2639.8 576.7M2080.7 1219.8Q2360.6 898.7 2638.9 576.8M2090.6 1218.6Q2365.9 901.8 2639.0 588.4M2089.1 1218.1Q2364.9 903.4 2639.3 589.8M2101.6 1220.4Q2369.3 909.9 2638.7 600.0M2100.1 1219.3Q2367.6 911.0 2638.9 602.1M2109.9 1218.4Q2376.5 915.5 2639.4 613.2M2109.8 1219.2Q2376.4 916.6 2638.8 614.3M2121.6 1218.3Q2378.7 919.2 2638.9 624.3M2120.4 1220.1Q2377.0 924.9 2637.4 626.6M2131.3 1218.1Q2386.3 925.9 2639.2 636.6M2131.1 1220.3Q2386.1 927.5 2639.1 638.4M2143.4 1220.1Q2389.8 937.5 2638.4 650.8M2143.7 1218.0Q2391.8 932.2 2637.0 650.0M2153.1 1220.2Q2395.2 939.6 2637.5 662.8M2153.2 1219.7Q2394.2 942.3 2638.3 662.3M2163.8 1219.9Q2400.9 948.1 2638.9 673.7M2165.6 1220.4Q2400.2 948.9 2638.7 673.3M2175.5 1220.5Q2408.8 954.9 2638.0 686.4M2175.1 1218.9Q2406.2 953.9 2638.3 687.3M2185.8 1220.7Q2410.4 958.1 2639.4 697.7M2185.2 1219.8Q2410.3 961.1 2639.4 699.5M2197.0 1220.6Q2419.4 966.6 2638.7 709.8M2196.6 1220.7Q2417.6 966.3 2638.0 709.3M2205.7 1220.3Q2423.2 971.9 2639.8 721.9M2206.5 1218.6Q2423.4 970.9 2637.8 723.5M2216.0 1220.4Q2428.0 979.0 2639.3 734.1M2218.4 1219.6Q2427.0 976.0 2638.4 735.2M2226.9 1220.1Q2432.1 983.8 2638.1 747.3M2226.8 1218.1Q2431.7 983.0 2640.0 746.7M2239.3 1218.5Q2439.1 986.5 2638.8 758.8M2237.0 1221.0Q2438.6 989.1 2639.6 759.2M2249.9 1219.3Q2446.3 997.8 2639.8 772.3M2248.3 1218.1Q2441.1 992.3 2637.6 770.5M2259.8 1220.6Q2450.9 1000.9 2638.4 785.0M2259.9 1219.2Q2447.6 1002.4 2637.4 785.1M2270.7 1220.9Q2454.6 1006.7 2639.0 795.6M2271.6 1221.0Q2453.6 1007.1 2637.7 794.5M2282.1 1220.7Q2462.0 1014.6 2639.5 806.7M2281.3 1221.0Q2460.3 1015.9 2637.2 807.0M2292.0 1218.9Q2463.6 1019.2 2638.8 821.0M2290.7 1218.4Q2463.4 1017.2 2638.4 819.3M2302.6 1218.0Q2468.8 1026.7 2639.2 831.5M2301.2 1220.8Q2468.8 1027.0 2639.6 833.6M2311.4 1220.8Q2475.3 1032.2 2639.5 845.0M2313.6 1219.4Q2475.0 1029.6 2638.9 843.6M2323.9 1219.7Q2479.6 1038.4 2637.4 858.0M2322.2 1218.8Q2479.4 1037.5 2639.5 856.3M2333.3 1220.7Q2483.4 1047.3 2637.3 870.5M2334.4 1218.6Q2485.3 1042.2 2638.4 868.4M2344.0 1221.0Q2490.2 1050.8 2640.0 882.5M2345.6 1218.2Q2494.5 1047.3 2639.2 880.6M2356.0 1219.0Q2498.2 1055.6 2637.4 891.9M2354.1 1219.3Q2497.2 1054.4 2639.7 892.6M2364.7 1220.3Q2500.1 1060.7 2639.1 904.7M2366.0 1219.5Q2502.4 1063.0 2637.8 904.7M2377.2 1219.7Q2508.4 1067.7 2637.6 916.5M2376.9 1218.2Q2509.7 1069.3 2639.4 917.3M2386.8 1218.0Q2514.9 1073.0 2639.7 929.9M2385.9 1220.5Q2511.4 1075.2 2638.1 929.0M2396.0 1219.6Q2515.5 1081.8 2638.3 942.2M2398.4 1220.6Q2517.7 1082.8 2638.0 942.8M2406.7 1220.6Q2523.4 1087.6 2639.9 954.4M2408.2 1218.1Q2522.6 1084.1 2639.9 953.6M2417.9 1220.5Q2528.4 1091.6 2637.1 965.4M2417.2 1219.8Q2528.9 1091.5 2638.7 966.7M2430.4 1220.2Q2533.7 1098.9 2637.1 977.7M2428.6 1218.4Q2533.8 1099.6 2638.2 977.7M2438.8 1219.7Q2540.4 1106.8 2639.2 990.0M2439.5 1219.3Q2539.1 1107.1 2639.5 991.1M2451.3 1219.0Q2544.2 1113.0 2637.7 1002.7M2451.4 1220.7Q2543.4 1112.6 2639.4 1004.2M2462.4 1220.8Q2550.7 1117.4 2637.7 1015.1M2461.1 1218.2Q2547.6 1115.2 2638.3 1015.4M2473.1 1220.3Q2557.8 1125.8 2639.8 1028.0M2472.8 1218.1Q2556.6 1121.5 2638.9 1026.9M2482.4 1220.8Q2560.7 1129.6 2638.9 1039.0M2483.6 1218.9Q2559.1 1129.9 2637.9 1040.2M2494.2 1219.5Q2566.2 1134.1 2637.8 1051.8M2491.7 1218.4Q2563.9 1133.9 2637.9 1051.7M2502.2 1219.6Q2571.2 1142.7 2639.5 1064.5M2502.6 1220.1Q2571.0 1142.1 2638.4 1064.3M2513.5 1218.7Q2575.1 1147.9 2637.7 1076.4M2512.6 1219.1Q2576.3 1147.3 2639.6 1075.6M2524.0 1221.0Q2579.4 1153.2 2637.9 1089.3M2525.8 1219.3Q2581.2 1154.8 2637.2 1088.2M2534.1 1218.7Q2585.5 1159.3 2639.9 1101.4M2534.8 1220.0Q2588.2 1161.0 2638.8 1101.8M2546.6 1220.2Q2594.2 1167.5 2639.3 1112.8M2547.1 1218.4Q2594.5 1165.3 2639.6 1111.4M2556.4 1220.9Q2598.8 1174.5 2638.7 1124.9M2556.8 1219.1Q2598.5 1171.2 2638.4 1125.0M2566.7 1219.7Q2603.7 1179.8 2638.2 1136.8M2567.0 1219.3Q2600.7 1178.4 2637.6 1136.7M2577.9 1218.3Q2610.3 1185.1 2639.8 1149.0M2579.0 1218.6Q2606.5 1182.7 2638.3 1150.7M2588.4 1219.5Q2614.3 1193.2 2639.8 1162.5M2588.3 1219.6Q2613.1 1190.9 2639.1 1161.4M2598.4 1220.8Q2617.0 1196.9 2639.0 1174.0M2598.6 1219.7Q2620.7 1197.3 2638.7 1175.0M2609.3 1219.9Q2624.8 1204.1 2640.0 1185.6M2608.5 1219.0Q2624.3 1201.3 2639.9 1187.1M2621.2 1220.1Q2632.1 1209.6 2639.5 1199.7M2619.0 1218.9Q2627.4 1207.2 2638.5 1198.3M2631.0 1219.8Q2635.2 1213.9 2638.1 1212.0M2630.4 1220.4Q2632.0 1214.8 2637.9 1211.0" stroke="#fde57e" stroke-width="1" fill="none"/></g><path d="M1363.1331504779287,531.5619209154144 L2570.8179372331674,531.6454880540347 Q2635.176008425751,530.8917404029357 2634.318435188177,595.972456714935 L2634.6630956200593,1151.6280633454653 Q2635.6939027697144,1215.9583689105314 2571.471046031784,1215.966894492179 L1363.6946953967617,1215.5108629936328 Q1299.6888049215993,1216.5152634300007 1299.5324536945366,1152.337752598682 L1299.7399760655173,594.8896440135178 Q1299.8615223448016,531.6275394161039 1363.221774723322,530.8434164520577" stroke="#1b1b1b" stroke-width="1.9" fill="none"/><path d="M1364.0117381317705,531.4618487241316 L2571.3179372331674,532.0303379203576 Q2636.4760084257514,532.0895381346174 2635.618435188177,595.972456714935 L2635.963095620059,1152.1280633454653 Q2636.9939027697146,1217.1583689105314 2572.071046031784,1217.1668944921792 L1364.1516721944574,1216.7108629936329 Q1299.6773076072136,1217.7152634300005 1299.5101401773607,1151.8402127623829 L1299.2912746842783,595.6191037503675 Q1299.6179525101584,532.0658824791869 1363.754774991289,532.10052384168" stroke="#1b1b1b" stroke-width="1.9" fill="none"/><g stroke="#1b1b1b" stroke-width="5.8" fill="none" stroke-linecap="round" stroke-linejoin="round"><path d="M1704.3,626.4 C1703.1,657.8 1703.7,692.9 1704.3,722.2 M1704.3,627.9 C1721.3,632.0 1741.9,639.2 1748.5,647.9 C1749.1,653.7 1731.6,670.2 1707.9,686.3 M1732.6,676.8 C1736.7,692.9 1739.8,707.3 1744.4,722.2 M1758.0,701.5 C1777.0,701.1 1801.7,693.9 1805.5,681.5 C1806.9,669.1 1789.4,666.0 1779.1,675.3 C1766.7,686.7 1762.5,714.5 1781.1,720.7 C1797.6,724.8 1812.1,715.6 1818.7,702.8 M1826.9,667.1 C1832.7,686.7 1839.9,707.3 1845.1,721.3 C1851.3,703.2 1860.6,682.5 1866.8,667.1 M1877.1,701.5 C1896.1,701.1 1920.8,693.9 1924.5,681.5 C1926.0,669.1 1908.4,666.0 1898.1,675.3 C1885.7,686.7 1881.6,714.5 1900.2,720.7 C1916.7,724.8 1931.1,715.6 1937.7,702.8 M1946.6,667.7 C1960.6,669.7 1975.1,670.6 1987.1,671.8 C1973.0,688.7 1956.5,705.2 1945.2,720.1 C1960.6,719.7 1977.2,719.3 1989.1,719.7 M2044.2,671.2 C2026.7,661.9 2008.1,674.3 2004.0,697.0 C2000.9,717.6 2018.4,723.8 2032.9,713.5 C2047.3,701.1 2049.4,678.4 2038.0,669.1 M2059.3,667.7 C2061.8,686.7 2059.7,705.2 2057.2,720.7 M2059.3,698.0 C2067.9,682.5 2082.4,669.1 2089.6,669.7 C2094.8,672.2 2093.7,703.2 2098.5,722.2 M2106.1,701.5 C2125.1,701.1 2149.9,693.9 2153.6,681.5 C2155.0,669.1 2137.5,666.0 2127.2,675.3 C2114.8,686.7 2110.7,714.5 2129.2,720.7 C2145.7,724.8 2160.2,715.6 2166.8,702.8"/><path transform="translate(1.20,-1.20)" d="M1704.3,626.4 C1703.1,657.8 1703.7,692.9 1704.3,722.2 M1704.3,627.9 C1721.3,632.0 1741.9,639.2 1748.5,647.9 C1749.1,653.7 1731.6,670.2 1707.9,686.3 M1732.6,676.8 C1736.7,692.9 1739.8,707.3 1744.4,722.2 M1758.0,701.5 C1777.0,701.1 1801.7,693.9 1805.5,681.5 C1806.9,669.1 1789.4,666.0 1779.1,675.3 C1766.7,686.7 1762.5,714.5 1781.1,720.7 C1797.6,724.8 1812.1,715.6 1818.7,702.8 M1826.9,667.1 C1832.7,686.7 1839.9,707.3 1845.1,721.3 C1851.3,703.2 1860.6,682.5 1866.8,667.1 M1877.1,701.5 C1896.1,701.1 1920.8,693.9 1924.5,681.5 C1926.0,669.1 1908.4,666.0 1898.1,675.3 C1885.7,686.7 1881.6,714.5 1900.2,720.7 C1916.7,724.8 1931.1,715.6 1937.7,702.8 M1946.6,667.7 C1960.6,669.7 1975.1,670.6 1987.1,671.8 C1973.0,688.7 1956.5,705.2 1945.2,720.1 C1960.6,719.7 1977.2,719.3 1989.1,719.7 M2044.2,671.2 C2026.7,661.9 2008.1,674.3 2004.0,697.0 C2000.9,717.6 2018.4,723.8 2032.9,713.5 C2047.3,701.1 2049.4,678.4 2038.0,669.1 M2059.3,667.7 C2061.8,686.7 2059.7,705.2 2057.2,720.7 M2059.3,698.0 C2067.9,682.5 2082.4,669.1 2089.6,669.7 C2094.8,672.2 2093.7,703.2 2098.5,722.2 M2106.1,701.5 C2125.1,701.1 2149.9,693.9 2153.6,681.5 C2155.0,669.1 2137.5,666.0 2127.2,675.3 C2114.8,686.7 2110.7,714.5 2129.2,720.7 C2145.7,724.8 2160.2,715.6 2166.8,702.8"/><path transform="translate(-1.20,1.20)" d="M1704.3,626.4 C1703.1,657.8 1703.7,692.9 1704.3,722.2 M1704.3,627.9 C1721.3,632.0 1741.9,639.2 1748.5,647.9 C1749.1,653.7 1731.6,670.2 1707.9,686.3 M1732.6,676.8 C1736.7,692.9 1739.8,707.3 1744.4,722.2 M1758.0,701.5 C1777.0,701.1 1801.7,693.9 1805.5,681.5 C1806.9,669.1 1789.4,666.0 1779.1,675.3 C1766.7,686.7 1762.5,714.5 1781.1,720.7 C1797.6,724.8 1812.1,715.6 1818.7,702.8 M1826.9,667.1 C1832.7,686.7 1839.9,707.3 1845.1,721.3 C1851.3,703.2 1860.6,682.5 1866.8,667.1 M1877.1,701.5 C1896.1,701.1 1920.8,693.9 1924.5,681.5 C1926.0,669.1 1908.4,666.0 1898.1,675.3 C1885.7,686.7 1881.6,714.5 1900.2,720.7 C1916.7,724.8 1931.1,715.6 1937.7,702.8 M1946.6,667.7 C1960.6,669.7 1975.1,670.6 1987.1,671.8 C1973.0,688.7 1956.5,705.2 1945.2,720.1 C1960.6,719.7 1977.2,719.3 1989.1,719.7 M2044.2,671.2 C2026.7,661.9 2008.1,674.3 2004.0,697.0 C2000.9,717.6 2018.4,723.8 2032.9,713.5 C2047.3,701.1 2049.4,678.4 2038.0,669.1 M2059.3,667.7 C2061.8,686.7 2059.7,705.2 2057.2,720.7 M2059.3,698.0 C2067.9,682.5 2082.4,669.1 2089.6,669.7 C2094.8,672.2 2093.7,703.2 2098.5,722.2 M2106.1,701.5 C2125.1,701.1 2149.9,693.9 2153.6,681.5 C2155.0,669.1 2137.5,666.0 2127.2,675.3 C2114.8,686.7 2110.7,714.5 2129.2,720.7 C2145.7,724.8 2160.2,715.6 2166.8,702.8"/></g><g stroke="#1b1b1b" stroke-width="3.3" fill="none" stroke-linecap="round" stroke-linejoin="round"><path d="M1356.7,892.8 C1360.9,876.1 1365.6,858.3 1369.8,842.8 C1374.5,859.5 1379.3,877.3 1384.1,893.4 M1362.0,874.7 L1378.1,872.0 M1363.8,878.5 C1370.4,880.9 1376.9,885.7 1381.7,890.2 M1426.9,844.0 C1425.7,858.3 1425.9,876.1 1427.5,886.3 C1428.3,891.6 1431.0,892.2 1433.1,887.8 M1438.8,852.9 C1441.8,855.3 1445.3,856.5 1449.5,856.5 M1443.5,864.8 C1443.5,875.0 1443.9,883.3 1445.6,888.6 C1446.8,891.9 1448.9,891.0 1450.3,886.9 M1479.9,868.4 C1475.2,863.0 1466.8,864.2 1462.1,872.6 C1457.3,882.1 1462.1,888.0 1468.0,885.7 C1472.8,883.3 1477.5,876.1 1479.9,868.4 M1480.5,866.0 C1480.5,879.7 1481.1,891.6 1478.1,900.5 C1475.2,907.7 1464.4,905.3 1458.5,897.0 M1493.6,844.0 C1493.0,858.3 1491.8,876.1 1490.8,892.6 M1491.5,878.5 C1495.3,870.2 1501.3,864.2 1504.3,866.0 C1507.8,868.4 1508.4,882.1 1511.4,894.0 M1529.3,855.3 C1529.1,867.8 1528.7,882.1 1530.5,888.6 C1532.3,892.8 1537.6,890.4 1540.6,886.3 M1518.0,866.9 L1540.0,866.0 M1549.2,866.0 C1550.7,875.0 1552.5,884.5 1554.5,893.0 C1557.2,885.7 1560.2,879.1 1563.2,872.6 C1565.0,879.7 1566.7,886.9 1568.3,893.6 C1570.3,884.5 1572.3,875.0 1573.9,864.8 M1577.7,882.7 C1588.2,882.1 1602.5,878.5 1606.7,872.6 C1609.0,867.2 1600.1,863.0 1594.2,866.0 C1587.0,870.2 1582.3,882.1 1587.0,890.4 C1591.8,896.4 1604.9,892.8 1611.8,883.9 M1615.0,852.9 C1618.0,855.3 1621.5,856.5 1625.7,856.5 M1619.7,864.8 C1619.7,875.0 1620.1,883.3 1621.8,888.6 C1623.0,891.9 1625.1,891.0 1626.5,886.9 M1655.1,868.4 C1650.4,863.0 1642.0,864.2 1637.3,872.6 C1632.5,882.1 1637.3,888.0 1643.2,885.7 C1648.0,883.3 1652.7,876.1 1655.1,868.4 M1655.7,866.0 C1655.7,879.7 1656.3,891.6 1653.3,900.5 C1650.4,907.7 1639.6,905.3 1633.7,897.0 M1668.9,844.0 C1668.3,858.3 1667.1,876.1 1666.1,892.6 M1666.8,878.5 C1670.6,870.2 1676.6,864.2 1679.6,866.0 C1683.1,868.4 1683.7,882.1 1686.7,894.0 M1704.5,855.3 C1704.3,867.8 1703.9,882.1 1705.7,888.6 C1707.5,892.8 1712.8,890.4 1715.8,886.3 M1693.2,866.9 L1715.2,866.0 M1756.3,844.0 C1755.1,858.3 1755.3,876.1 1756.9,886.3 C1757.7,891.6 1760.4,892.2 1762.5,887.8 M1775.9,864.2 C1770.6,870.2 1768.2,882.1 1771.8,889.2 C1775.3,895.2 1784.9,892.8 1787.8,882.1 C1790.2,872.6 1786.0,864.2 1778.3,865.4 C1776.5,865.4 1775.3,866.0 1774.1,867.2 M1822.4,871.4 C1818.8,865.4 1812.9,863.6 1808.1,867.8 C1802.2,873.8 1801.0,886.9 1808.1,892.2 C1814.1,895.8 1821.2,891.6 1824.2,885.1 M1850.9,867.2 C1846.2,863.6 1839.0,865.4 1834.3,872.6 C1829.5,880.9 1830.7,890.4 1836.6,891.6 C1842.6,892.2 1849.7,879.7 1852.1,868.4 M1851.9,865.4 C1851.5,876.1 1853.3,886.9 1856.9,893.4 M1868.3,844.0 C1867.1,858.3 1867.3,876.1 1868.9,886.3 C1869.7,891.6 1872.4,892.2 1874.5,887.8 M1878.1,868.0 C1886.7,869.6 1896.2,870.2 1905.2,870.8 M1932.9,850.0 C1931.1,844.0 1923.4,841.6 1920.4,850.0 C1919.2,858.3 1919.2,882.1 1919.8,905.9 M1909.3,868.8 L1933.5,866.4 M1940.6,852.9 C1943.6,855.3 1947.1,856.5 1951.3,856.5 M1945.3,864.8 C1945.3,875.0 1945.7,883.3 1947.4,888.6 C1948.6,891.9 1950.7,891.0 1952.1,886.9 M1960.0,865.4 C1960.9,875.0 1961.5,884.5 1962.1,893.0 M1962.1,878.5 C1965.0,870.2 1969.8,864.8 1974.6,866.0 C1978.1,866.9 1980.5,869.0 1983.1,870.8 M2007.2,868.4 C2003.1,864.2 1995.9,863.6 1992.9,869.0 C1990.6,875.0 2005.4,876.1 2007.8,883.3 C2009.0,890.4 1997.1,896.4 1986.6,886.3 M2026.9,855.3 C2026.7,867.8 2026.3,882.1 2028.1,888.6 C2029.9,892.8 2035.2,890.4 2038.2,886.3 M2015.6,866.9 L2037.6,866.0 M2094.7,868.4 C2090.0,863.0 2081.6,864.2 2076.9,872.6 C2072.1,882.1 2076.9,888.0 2082.8,885.7 C2087.6,883.3 2092.3,876.1 2094.7,868.4 M2095.3,866.0 C2095.3,879.7 2095.9,891.6 2092.9,900.5 C2090.0,907.7 2079.2,905.3 2073.3,897.0 M2103.3,865.4 C2104.2,875.0 2104.8,884.5 2105.4,893.0 M2105.4,878.5 C2108.3,870.2 2113.1,864.8 2117.9,866.0 C2121.4,866.9 2123.8,869.0 2126.4,870.8 M2153.6,867.2 C2148.9,863.6 2141.7,865.4 2137.0,872.6 C2132.2,880.9 2133.4,890.4 2139.3,891.6 C2145.3,892.2 2152.4,879.7 2154.8,868.4 M2154.6,865.4 C2154.2,876.1 2156.0,886.9 2159.6,893.4 M2166.7,862.5 C2166.4,876.1 2166.4,891.6 2166.7,905.9 M2166.7,864.2 C2175.0,866.0 2185.7,870.2 2186.9,876.1 C2185.7,882.1 2175.0,886.9 2164.1,888.0 M2198.3,844.0 C2197.7,858.3 2196.5,876.1 2195.5,892.6 M2196.2,878.5 C2200.0,870.2 2206.0,864.2 2209.0,866.0 C2212.5,868.4 2213.1,882.1 2216.1,894.0 M2223.2,852.9 C2226.2,855.3 2229.7,856.5 2233.9,856.5 M2227.9,864.8 C2227.9,875.0 2228.3,883.3 2230.0,888.6 C2231.2,891.9 2233.3,891.0 2234.7,886.9 M2264.9,871.4 C2261.3,865.4 2255.4,863.6 2250.6,867.8 C2244.7,873.8 2243.5,886.9 2250.6,892.2 C2256.6,895.8 2263.7,891.6 2266.7,885.1 M2273.5,868.0 C2282.1,869.6 2291.6,870.2 2300.6,870.8 M2326.2,871.4 C2322.6,865.4 2316.7,863.6 2311.9,867.8 C2306.0,873.8 2304.8,886.9 2311.9,892.2 C2317.9,895.8 2325.0,891.6 2328.0,885.1 M2335.3,882.7 C2345.8,882.1 2360.1,878.5 2364.3,872.6 C2366.6,867.2 2357.7,863.0 2351.8,866.0 C2344.6,870.2 2339.9,882.1 2344.6,890.4 C2349.4,896.4 2362.5,892.8 2369.4,883.9 M2374.4,864.8 C2375.0,873.8 2374.4,884.5 2373.8,893.4 M2374.4,879.7 C2378.5,870.2 2384.5,864.2 2387.5,865.7 C2391.0,867.8 2391.6,882.1 2394.0,894.6 M2410.6,855.3 C2410.4,867.8 2410.0,882.1 2411.8,888.6 C2413.6,892.8 2418.9,890.4 2421.9,886.3 M2399.3,866.9 L2421.3,866.0 M2428.1,865.4 C2429.0,875.0 2429.6,884.5 2430.2,893.0 M2430.2,878.5 C2433.1,870.2 2437.9,864.8 2442.7,866.0 C2446.2,866.9 2448.6,869.0 2451.2,870.8 M2455.0,852.9 C2458.0,855.3 2461.5,856.5 2465.7,856.5 M2459.7,864.8 C2459.7,875.0 2460.1,883.3 2461.8,888.6 C2463.0,891.9 2465.1,891.0 2466.5,886.9 M2496.1,871.4 C2492.5,865.4 2486.6,863.6 2481.8,867.8 C2475.9,873.8 2474.7,886.9 2481.8,892.2 C2487.8,895.8 2494.9,891.6 2497.9,885.1 M1357.9,953.1 C1357.6,966.7 1357.6,982.2 1357.9,996.5 M1357.9,954.8 C1366.2,956.6 1376.9,960.8 1378.1,966.7 C1376.9,972.7 1366.2,977.5 1355.3,978.6 M1385.0,956.0 C1385.9,965.6 1386.5,975.1 1387.1,983.6 M1387.1,969.1 C1390.0,960.8 1394.8,955.4 1399.6,956.6 C1403.1,957.5 1405.5,959.6 1408.1,961.4 M1420.3,954.8 C1415.0,960.8 1412.6,972.7 1416.2,979.8 C1419.7,985.8 1429.3,983.4 1432.2,972.7 C1434.6,963.2 1430.4,954.8 1422.7,956.0 C1420.9,956.0 1419.7,956.6 1418.5,957.8 M1465.0,957.2 C1460.2,953.6 1451.9,955.4 1447.2,962.6 C1442.4,970.9 1443.6,981.0 1450.1,982.2 C1456.1,982.2 1463.8,970.3 1466.2,958.4 M1468.6,934.0 C1467.4,948.9 1465.6,966.7 1466.8,975.1 C1467.4,979.8 1468.6,982.8 1469.5,984.6 M1477.5,954.8 C1476.9,966.7 1477.5,979.8 1482.2,982.2 C1487.0,983.4 1493.0,972.7 1495.6,960.8 M1495.9,954.8 C1495.6,965.6 1495.9,976.3 1496.8,984.6 M1525.7,962.0 C1522.1,956.0 1516.2,954.2 1511.4,958.4 C1505.5,964.4 1504.3,977.5 1511.4,982.8 C1517.4,986.4 1524.5,982.2 1527.5,975.7 M1545.4,945.9 C1545.2,958.4 1544.8,972.7 1546.6,979.2 C1548.4,983.4 1553.7,981.0 1556.7,976.9 M1534.1,957.5 L1556.1,956.6 M1561.4,943.5 C1564.4,945.9 1567.9,947.1 1572.1,947.1 M1566.1,955.4 C1566.1,965.6 1566.5,973.9 1568.2,979.2 C1569.4,982.5 1571.5,981.6 1572.9,977.5 M1578.7,954.8 C1581.7,964.4 1585.2,974.5 1588.8,983.6 C1593.0,973.9 1598.3,963.8 1603.4,954.2 M1607.9,943.5 C1610.9,945.9 1614.4,947.1 1618.6,947.1 M1612.6,955.4 C1612.6,965.6 1613.0,973.9 1614.7,979.2 C1615.9,982.5 1618.0,981.6 1619.4,977.5 M1637.2,945.9 C1637.0,958.4 1636.6,972.7 1638.4,979.2 C1640.2,983.4 1645.5,981.0 1648.5,976.9 M1625.9,957.5 L1647.9,956.6 M1656.7,954.5 C1657.4,962.0 1658.2,971.5 1661.1,975.6 C1663.6,977.5 1670.7,965.6 1675.5,956.6 M1676.9,954.7 C1676.7,966.7 1676.5,978.6 1674.0,987.2 C1671.9,993.5 1668.4,995.9 1664.4,995.6 C1660.0,994.7 1656.5,989.4 1652.8,984.5 M1725.5,945.9 C1725.3,958.4 1724.9,972.7 1726.7,979.2 C1728.5,983.4 1733.8,981.0 1736.8,976.9 M1714.2,957.5 L1736.2,956.6 M1748.7,954.8 C1743.4,960.8 1741.0,972.7 1744.6,979.8 C1748.1,985.8 1757.7,983.4 1760.6,972.7 C1763.0,963.2 1758.8,954.8 1751.1,956.0 C1749.3,956.0 1748.1,956.6 1746.9,957.8 M1777.8,954.8 C1772.5,960.8 1770.1,972.7 1773.7,979.8 C1777.2,985.8 1786.8,983.4 1789.7,972.7 C1792.1,963.2 1787.9,954.8 1780.2,956.0 C1778.4,956.0 1777.2,956.6 1776.0,957.8 M1806.5,934.6 C1805.3,948.9 1805.5,966.7 1807.1,976.9 C1807.9,982.2 1810.6,982.8 1812.7,978.4 M1858.2,945.9 C1858.0,958.4 1857.6,972.7 1859.4,979.2 C1861.2,983.4 1866.5,981.0 1869.5,976.9 M1846.9,957.5 L1868.9,956.6 M1882.6,954.8 C1877.3,960.8 1874.9,972.7 1878.5,979.8 C1882.0,985.8 1891.6,983.4 1894.5,972.7 C1896.9,963.2 1892.7,954.8 1885.0,956.0 C1883.2,956.0 1882.0,956.6 1880.8,957.8 M1938.7,934.0 C1937.5,948.9 1936.3,966.7 1935.7,983.2 M1937.5,960.8 C1945.2,962.0 1955.9,964.4 1957.1,969.1 C1955.9,976.3 1945.2,982.2 1935.9,983.6 M1965.5,954.8 C1964.9,966.7 1965.5,979.8 1970.2,982.2 C1975.0,983.4 1981.0,972.7 1983.6,960.8 M1983.9,954.8 C1983.6,965.6 1983.9,976.3 1984.8,984.6 M1992.9,943.5 C1995.9,945.9 1999.4,947.1 2003.6,947.1 M1997.6,955.4 C1997.6,965.6 1998.0,973.9 1999.7,979.2 C2000.9,982.5 2003.0,981.6 2004.4,977.5 M2016.7,934.6 C2015.5,948.9 2015.7,966.7 2017.3,976.9 C2018.1,982.2 2020.8,982.8 2022.9,978.4 M2051.2,957.2 C2046.4,953.6 2038.1,955.4 2033.4,962.6 C2028.6,970.9 2029.8,981.0 2036.3,982.2 C2042.3,982.2 2050.0,970.3 2052.4,958.4 M2054.8,934.0 C2053.6,948.9 2051.8,966.7 2053.0,975.1 C2053.6,979.8 2054.8,982.8 2055.7,984.6 M2094.3,954.5 C2095.0,962.0 2095.8,971.5 2098.7,975.6 C2101.2,977.5 2108.3,965.6 2113.1,956.6 M2114.5,954.7 C2114.3,966.7 2114.1,978.6 2111.6,987.2 C2109.5,993.5 2106.0,995.9 2102.0,995.6 C2097.6,994.7 2094.1,989.4 2090.4,984.5 M2130.3,954.8 C2125.0,960.8 2122.6,972.7 2126.2,979.8 C2129.7,985.8 2139.3,983.4 2142.2,972.7 C2144.6,963.2 2140.4,954.8 2132.7,956.0 C2130.9,956.0 2129.7,956.6 2128.5,957.8 M2152.4,954.8 C2151.8,966.7 2152.4,979.8 2157.1,982.2 C2161.9,983.4 2167.9,972.7 2170.5,960.8 M2170.8,954.8 C2170.5,965.6 2170.8,976.3 2171.7,984.6 M2179.8,956.0 C2180.7,965.6 2181.3,975.1 2181.9,983.6 M2181.9,969.1 C2184.8,960.8 2189.6,955.4 2194.4,956.6 C2197.9,957.5 2200.3,959.6 2202.9,961.4 M2258.2,959.0 C2254.1,954.8 2246.9,954.2 2243.9,959.6 C2241.6,965.6 2256.4,966.7 2258.8,973.9 C2260.0,981.0 2248.1,987.0 2237.6,976.9 M2265.6,973.3 C2276.1,972.7 2290.4,969.1 2294.6,963.2 C2296.9,957.8 2288.0,953.6 2282.1,956.6 C2274.9,960.8 2270.2,972.7 2274.9,981.0 C2279.7,987.0 2292.8,983.4 2299.7,974.5 M2324.3,962.0 C2320.7,956.0 2314.8,954.2 2310.0,958.4 C2304.1,964.4 2302.9,977.5 2310.0,982.8 C2316.0,986.4 2323.1,982.2 2326.1,975.7 M2341.5,954.8 C2336.2,960.8 2333.8,972.7 2337.4,979.8 C2340.9,985.8 2350.5,983.4 2353.4,972.7 C2355.8,963.2 2351.6,954.8 2343.9,956.0 C2342.1,956.0 2340.9,956.6 2339.7,957.8 M2364.8,955.4 C2365.4,964.4 2364.8,975.1 2364.2,984.0 M2364.8,970.3 C2368.9,960.8 2374.9,954.8 2377.9,956.3 C2381.4,958.4 2382.0,972.7 2384.4,985.2 M2413.0,957.2 C2408.2,953.6 2399.9,955.4 2395.2,962.6 C2390.4,970.9 2391.6,981.0 2398.1,982.2 C2404.1,982.2 2411.8,970.3 2414.2,958.4 M2416.6,934.0 C2415.4,948.9 2413.6,966.7 2414.8,975.1 C2415.4,979.8 2416.6,982.8 2417.5,984.6 M2458.9,934.0 C2457.7,948.9 2456.5,966.7 2455.9,983.2 M2457.7,960.8 C2465.4,962.0 2476.1,964.4 2477.3,969.1 C2476.1,976.3 2465.4,982.2 2456.1,983.6 M2484.8,956.0 C2485.7,965.6 2486.3,975.1 2486.9,983.6 M2486.9,969.1 C2489.8,960.8 2494.6,955.4 2499.4,956.6 C2502.9,957.5 2505.3,959.6 2507.9,961.4 M2532.7,957.8 C2528.0,954.2 2520.8,956.0 2516.1,963.2 C2511.3,971.5 2512.5,981.0 2518.4,982.2 C2524.4,982.8 2531.5,970.3 2533.9,959.0 M2533.7,956.0 C2533.3,966.7 2535.1,977.5 2538.7,984.0 M2544.7,943.5 C2547.7,945.9 2551.2,947.1 2555.4,947.1 M2549.4,955.4 C2549.4,965.6 2549.8,973.9 2551.5,979.2 C2552.7,982.5 2554.8,981.6 2556.2,977.5 M2564.3,955.4 C2564.9,964.4 2564.3,975.1 2563.7,984.0 M2564.3,970.3 C2568.4,960.8 2574.4,954.8 2577.4,956.3 C2580.9,958.4 2581.5,972.7 2583.9,985.2"/><path transform="translate(0.64,-0.64)" d="M1356.7,892.8 C1360.9,876.1 1365.6,858.3 1369.8,842.8 C1374.5,859.5 1379.3,877.3 1384.1,893.4 M1362.0,874.7 L1378.1,872.0 M1363.8,878.5 C1370.4,880.9 1376.9,885.7 1381.7,890.2 M1426.9,844.0 C1425.7,858.3 1425.9,876.1 1427.5,886.3 C1428.3,891.6 1431.0,892.2 1433.1,887.8 M1438.8,852.9 C1441.8,855.3 1445.3,856.5 1449.5,856.5 M1443.5,864.8 C1443.5,875.0 1443.9,883.3 1445.6,888.6 C1446.8,891.9 1448.9,891.0 1450.3,886.9 M1479.9,868.4 C1475.2,863.0 1466.8,864.2 1462.1,872.6 C1457.3,882.1 1462.1,888.0 1468.0,885.7 C1472.8,883.3 1477.5,876.1 1479.9,868.4 M1480.5,866.0 C1480.5,879.7 1481.1,891.6 1478.1,900.5 C1475.2,907.7 1464.4,905.3 1458.5,897.0 M1493.6,844.0 C1493.0,858.3 1491.8,876.1 1490.8,892.6 M1491.5,878.5 C1495.3,870.2 1501.3,864.2 1504.3,866.0 C1507.8,868.4 1508.4,882.1 1511.4,894.0 M1529.3,855.3 C1529.1,867.8 1528.7,882.1 1530.5,888.6 C1532.3,892.8 1537.6,890.4 1540.6,886.3 M1518.0,866.9 L1540.0,866.0 M1549.2,866.0 C1550.7,875.0 1552.5,884.5 1554.5,893.0 C1557.2,885.7 1560.2,879.1 1563.2,872.6 C1565.0,879.7 1566.7,886.9 1568.3,893.6 C1570.3,884.5 1572.3,875.0 1573.9,864.8 M1577.7,882.7 C1588.2,882.1 1602.5,878.5 1606.7,872.6 C1609.0,867.2 1600.1,863.0 1594.2,866.0 C1587.0,870.2 1582.3,882.1 1587.0,890.4 C1591.8,896.4 1604.9,892.8 1611.8,883.9 M1615.0,852.9 C1618.0,855.3 1621.5,856.5 1625.7,856.5 M1619.7,864.8 C1619.7,875.0 1620.1,883.3 1621.8,888.6 C1623.0,891.9 1625.1,891.0 1626.5,886.9 M1655.1,868.4 C1650.4,863.0 1642.0,864.2 1637.3,872.6 C1632.5,882.1 1637.3,888.0 1643.2,885.7 C1648.0,883.3 1652.7,876.1 1655.1,868.4 M1655.7,866.0 C1655.7,879.7 1656.3,891.6 1653.3,900.5 C1650.4,907.7 1639.6,905.3 1633.7,897.0 M1668.9,844.0 C1668.3,858.3 1667.1,876.1 1666.1,892.6 M1666.8,878.5 C1670.6,870.2 1676.6,864.2 1679.6,866.0 C1683.1,868.4 1683.7,882.1 1686.7,894.0 M1704.5,855.3 C1704.3,867.8 1703.9,882.1 1705.7,888.6 C1707.5,892.8 1712.8,890.4 1715.8,886.3 M1693.2,866.9 L1715.2,866.0 M1756.3,844.0 C1755.1,858.3 1755.3,876.1 1756.9,886.3 C1757.7,891.6 1760.4,892.2 1762.5,887.8 M1775.9,864.2 C1770.6,870.2 1768.2,882.1 1771.8,889.2 C1775.3,895.2 1784.9,892.8 1787.8,882.1 C1790.2,872.6 1786.0,864.2 1778.3,865.4 C1776.5,865.4 1775.3,866.0 1774.1,867.2 M1822.4,871.4 C1818.8,865.4 1812.9,863.6 1808.1,867.8 C1802.2,873.8 1801.0,886.9 1808.1,892.2 C1814.1,895.8 1821.2,891.6 1824.2,885.1 M1850.9,867.2 C1846.2,863.6 1839.0,865.4 1834.3,872.6 C1829.5,880.9 1830.7,890.4 1836.6,891.6 C1842.6,892.2 1849.7,879.7 1852.1,868.4 M1851.9,865.4 C1851.5,876.1 1853.3,886.9 1856.9,893.4 M1868.3,844.0 C1867.1,858.3 1867.3,876.1 1868.9,886.3 C1869.7,891.6 1872.4,892.2 1874.5,887.8 M1878.1,868.0 C1886.7,869.6 1896.2,870.2 1905.2,870.8 M1932.9,850.0 C1931.1,844.0 1923.4,841.6 1920.4,850.0 C1919.2,858.3 1919.2,882.1 1919.8,905.9 M1909.3,868.8 L1933.5,866.4 M1940.6,852.9 C1943.6,855.3 1947.1,856.5 1951.3,856.5 M1945.3,864.8 C1945.3,875.0 1945.7,883.3 1947.4,888.6 C1948.6,891.9 1950.7,891.0 1952.1,886.9 M1960.0,865.4 C1960.9,875.0 1961.5,884.5 1962.1,893.0 M1962.1,878.5 C1965.0,870.2 1969.8,864.8 1974.6,866.0 C1978.1,866.9 1980.5,869.0 1983.1,870.8 M2007.2,868.4 C2003.1,864.2 1995.9,863.6 1992.9,869.0 C1990.6,875.0 2005.4,876.1 2007.8,883.3 C2009.0,890.4 1997.1,896.4 1986.6,886.3 M2026.9,855.3 C2026.7,867.8 2026.3,882.1 2028.1,888.6 C2029.9,892.8 2035.2,890.4 2038.2,886.3 M2015.6,866.9 L2037.6,866.0 M2094.7,868.4 C2090.0,863.0 2081.6,864.2 2076.9,872.6 C2072.1,882.1 2076.9,888.0 2082.8,885.7 C2087.6,883.3 2092.3,876.1 2094.7,868.4 M2095.3,866.0 C2095.3,879.7 2095.9,891.6 2092.9,900.5 C2090.0,907.7 2079.2,905.3 2073.3,897.0 M2103.3,865.4 C2104.2,875.0 2104.8,884.5 2105.4,893.0 M2105.4,878.5 C2108.3,870.2 2113.1,864.8 2117.9,866.0 C2121.4,866.9 2123.8,869.0 2126.4,870.8 M2153.6,867.2 C2148.9,863.6 2141.7,865.4 2137.0,872.6 C2132.2,880.9 2133.4,890.4 2139.3,891.6 C2145.3,892.2 2152.4,879.7 2154.8,868.4 M2154.6,865.4 C2154.2,876.1 2156.0,886.9 2159.6,893.4 M2166.7,862.5 C2166.4,876.1 2166.4,891.6 2166.7,905.9 M2166.7,864.2 C2175.0,866.0 2185.7,870.2 2186.9,876.1 C2185.7,882.1 2175.0,886.9 2164.1,888.0 M2198.3,844.0 C2197.7,858.3 2196.5,876.1 2195.5,892.6 M2196.2,878.5 C2200.0,870.2 2206.0,864.2 2209.0,866.0 C2212.5,868.4 2213.1,882.1 2216.1,894.0 M2223.2,852.9 C2226.2,855.3 2229.7,856.5 2233.9,856.5 M2227.9,864.8 C2227.9,875.0 2228.3,883.3 2230.0,888.6 C2231.2,891.9 2233.3,891.0 2234.7,886.9 M2264.9,871.4 C2261.3,865.4 2255.4,863.6 2250.6,867.8 C2244.7,873.8 2243.5,886.9 2250.6,892.2 C2256.6,895.8 2263.7,891.6 2266.7,885.1 M2273.5,868.0 C2282.1,869.6 2291.6,870.2 2300.6,870.8 M2326.2,871.4 C2322.6,865.4 2316.7,863.6 2311.9,867.8 C2306.0,873.8 2304.8,886.9 2311.9,892.2 C2317.9,895.8 2325.0,891.6 2328.0,885.1 M2335.3,882.7 C2345.8,882.1 2360.1,878.5 2364.3,872.6 C2366.6,867.2 2357.7,863.0 2351.8,866.0 C2344.6,870.2 2339.9,882.1 2344.6,890.4 C2349.4,896.4 2362.5,892.8 2369.4,883.9 M2374.4,864.8 C2375.0,873.8 2374.4,884.5 2373.8,893.4 M2374.4,879.7 C2378.5,870.2 2384.5,864.2 2387.5,865.7 C2391.0,867.8 2391.6,882.1 2394.0,894.6 M2410.6,855.3 C2410.4,867.8 2410.0,882.1 2411.8,888.6 C2413.6,892.8 2418.9,890.4 2421.9,886.3 M2399.3,866.9 L2421.3,866.0 M2428.1,865.4 C2429.0,875.0 2429.6,884.5 2430.2,893.0 M2430.2,878.5 C2433.1,870.2 2437.9,864.8 2442.7,866.0 C2446.2,866.9 2448.6,869.0 2451.2,870.8 M2455.0,852.9 C2458.0,855.3 2461.5,856.5 2465.7,856.5 M2459.7,864.8 C2459.7,875.0 2460.1,883.3 2461.8,888.6 C2463.0,891.9 2465.1,891.0 2466.5,886.9 M2496.1,871.4 C2492.5,865.4 2486.6,863.6 2481.8,867.8 C2475.9,873.8 2474.7,886.9 2481.8,892.2 C2487.8,895.8 2494.9,891.6 2497.9,885.1 M1357.9,953.1 C1357.6,966.7 1357.6,982.2 1357.9,996.5 M1357.9,954.8 C1366.2,956.6 1376.9,960.8 1378.1,966.7 C1376.9,972.7 1366.2,977.5 1355.3,978.6 M1385.0,956.0 C1385.9,965.6 1386.5,975.1 1387.1,983.6 M1387.1,969.1 C1390.0,960.8 1394.8,955.4 1399.6,956.6 C1403.1,957.5 1405.5,959.6 1408.1,961.4 M1420.3,954.8 C1415.0,960.8 1412.6,972.7 1416.2,979.8 C1419.7,985.8 1429.3,983.4 1432.2,972.7 C1434.6,963.2 1430.4,954.8 1422.7,956.0 C1420.9,956.0 1419.7,956.6 1418.5,957.8 M1465.0,957.2 C1460.2,953.6 1451.9,955.4 1447.2,962.6 C1442.4,970.9 1443.6,981.0 1450.1,982.2 C1456.1,982.2 1463.8,970.3 1466.2,958.4 M1468.6,934.0 C1467.4,948.9 1465.6,966.7 1466.8,975.1 C1467.4,979.8 1468.6,982.8 1469.5,984.6 M1477.5,954.8 C1476.9,966.7 1477.5,979.8 1482.2,982.2 C1487.0,983.4 1493.0,972.7 1495.6,960.8 M1495.9,954.8 C1495.6,965.6 1495.9,976.3 1496.8,984.6 M1525.7,962.0 C1522.1,956.0 1516.2,954.2 1511.4,958.4 C1505.5,964.4 1504.3,977.5 1511.4,982.8 C1517.4,986.4 1524.5,982.2 1527.5,975.7 M1545.4,945.9 C1545.2,958.4 1544.8,972.7 1546.6,979.2 C1548.4,983.4 1553.7,981.0 1556.7,976.9 M1534.1,957.5 L1556.1,956.6 M1561.4,943.5 C1564.4,945.9 1567.9,947.1 1572.1,947.1 M1566.1,955.4 C1566.1,965.6 1566.5,973.9 1568.2,979.2 C1569.4,982.5 1571.5,981.6 1572.9,977.5 M1578.7,954.8 C1581.7,964.4 1585.2,974.5 1588.8,983.6 C1593.0,973.9 1598.3,963.8 1603.4,954.2 M1607.9,943.5 C1610.9,945.9 1614.4,947.1 1618.6,947.1 M1612.6,955.4 C1612.6,965.6 1613.0,973.9 1614.7,979.2 C1615.9,982.5 1618.0,981.6 1619.4,977.5 M1637.2,945.9 C1637.0,958.4 1636.6,972.7 1638.4,979.2 C1640.2,983.4 1645.5,981.0 1648.5,976.9 M1625.9,957.5 L1647.9,956.6 M1656.7,954.5 C1657.4,962.0 1658.2,971.5 1661.1,975.6 C1663.6,977.5 1670.7,965.6 1675.5,956.6 M1676.9,954.7 C1676.7,966.7 1676.5,978.6 1674.0,987.2 C1671.9,993.5 1668.4,995.9 1664.4,995.6 C1660.0,994.7 1656.5,989.4 1652.8,984.5 M1725.5,945.9 C1725.3,958.4 1724.9,972.7 1726.7,979.2 C1728.5,983.4 1733.8,981.0 1736.8,976.9 M1714.2,957.5 L1736.2,956.6 M1748.7,954.8 C1743.4,960.8 1741.0,972.7 1744.6,979.8 C1748.1,985.8 1757.7,983.4 1760.6,972.7 C1763.0,963.2 1758.8,954.8 1751.1,956.0 C1749.3,956.0 1748.1,956.6 1746.9,957.8 M1777.8,954.8 C1772.5,960.8 1770.1,972.7 1773.7,979.8 C1777.2,985.8 1786.8,983.4 1789.7,972.7 C1792.1,963.2 1787.9,954.8 1780.2,956.0 C1778.4,956.0 1777.2,956.6 1776.0,957.8 M1806.5,934.6 C1805.3,948.9 1805.5,966.7 1807.1,976.9 C1807.9,982.2 1810.6,982.8 1812.7,978.4 M1858.2,945.9 C1858.0,958.4 1857.6,972.7 1859.4,979.2 C1861.2,983.4 1866.5,981.0 1869.5,976.9 M1846.9,957.5 L1868.9,956.6 M1882.6,954.8 C1877.3,960.8 1874.9,972.7 1878.5,979.8 C1882.0,985.8 1891.6,983.4 1894.5,972.7 C1896.9,963.2 1892.7,954.8 1885.0,956.0 C1883.2,956.0 1882.0,956.6 1880.8,957.8 M1938.7,934.0 C1937.5,948.9 1936.3,966.7 1935.7,983.2 M1937.5,960.8 C1945.2,962.0 1955.9,964.4 1957.1,969.1 C1955.9,976.3 1945.2,982.2 1935.9,983.6 M1965.5,954.8 C1964.9,966.7 1965.5,979.8 1970.2,982.2 C1975.0,983.4 1981.0,972.7 1983.6,960.8 M1983.9,954.8 C1983.6,965.6 1983.9,976.3 1984.8,984.6 M1992.9,943.5 C1995.9,945.9 1999.4,947.1 2003.6,947.1 M1997.6,955.4 C1997.6,965.6 1998.0,973.9 1999.7,979.2 C2000.9,982.5 2003.0,981.6 2004.4,977.5 M2016.7,934.6 C2015.5,948.9 2015.7,966.7 2017.3,976.9 C2018.1,982.2 2020.8,982.8 2022.9,978.4 M2051.2,957.2 C2046.4,953.6 2038.1,955.4 2033.4,962.6 C2028.6,970.9 2029.8,981.0 2036.3,982.2 C2042.3,982.2 2050.0,970.3 2052.4,958.4 M2054.8,934.0 C2053.6,948.9 2051.8,966.7 2053.0,975.1 C2053.6,979.8 2054.8,982.8 2055.7,984.6 M2094.3,954.5 C2095.0,962.0 2095.8,971.5 2098.7,975.6 C2101.2,977.5 2108.3,965.6 2113.1,956.6 M2114.5,954.7 C2114.3,966.7 2114.1,978.6 2111.6,987.2 C2109.5,993.5 2106.0,995.9 2102.0,995.6 C2097.6,994.7 2094.1,989.4 2090.4,984.5 M2130.3,954.8 C2125.0,960.8 2122.6,972.7 2126.2,979.8 C2129.7,985.8 2139.3,983.4 2142.2,972.7 C2144.6,963.2 2140.4,954.8 2132.7,956.0 C2130.9,956.0 2129.7,956.6 2128.5,957.8 M2152.4,954.8 C2151.8,966.7 2152.4,979.8 2157.1,982.2 C2161.9,983.4 2167.9,972.7 2170.5,960.8 M2170.8,954.8 C2170.5,965.6 2170.8,976.3 2171.7,984.6 M2179.8,956.0 C2180.7,965.6 2181.3,975.1 2181.9,983.6 M2181.9,969.1 C2184.8,960.8 2189.6,955.4 2194.4,956.6 C2197.9,957.5 2200.3,959.6 2202.9,961.4 M2258.2,959.0 C2254.1,954.8 2246.9,954.2 2243.9,959.6 C2241.6,965.6 2256.4,966.7 2258.8,973.9 C2260.0,981.0 2248.1,987.0 2237.6,976.9 M2265.6,973.3 C2276.1,972.7 2290.4,969.1 2294.6,963.2 C2296.9,957.8 2288.0,953.6 2282.1,956.6 C2274.9,960.8 2270.2,972.7 2274.9,981.0 C2279.7,987.0 2292.8,983.4 2299.7,974.5 M2324.3,962.0 C2320.7,956.0 2314.8,954.2 2310.0,958.4 C2304.1,964.4 2302.9,977.5 2310.0,982.8 C2316.0,986.4 2323.1,982.2 2326.1,975.7 M2341.5,954.8 C2336.2,960.8 2333.8,972.7 2337.4,979.8 C2340.9,985.8 2350.5,983.4 2353.4,972.7 C2355.8,963.2 2351.6,954.8 2343.9,956.0 C2342.1,956.0 2340.9,956.6 2339.7,957.8 M2364.8,955.4 C2365.4,964.4 2364.8,975.1 2364.2,984.0 M2364.8,970.3 C2368.9,960.8 2374.9,954.8 2377.9,956.3 C2381.4,958.4 2382.0,972.7 2384.4,985.2 M2413.0,957.2 C2408.2,953.6 2399.9,955.4 2395.2,962.6 C2390.4,970.9 2391.6,981.0 2398.1,982.2 C2404.1,982.2 2411.8,970.3 2414.2,958.4 M2416.6,934.0 C2415.4,948.9 2413.6,966.7 2414.8,975.1 C2415.4,979.8 2416.6,982.8 2417.5,984.6 M2458.9,934.0 C2457.7,948.9 2456.5,966.7 2455.9,983.2 M2457.7,960.8 C2465.4,962.0 2476.1,964.4 2477.3,969.1 C2476.1,976.3 2465.4,982.2 2456.1,983.6 M2484.8,956.0 C2485.7,965.6 2486.3,975.1 2486.9,983.6 M2486.9,969.1 C2489.8,960.8 2494.6,955.4 2499.4,956.6 C2502.9,957.5 2505.3,959.6 2507.9,961.4 M2532.7,957.8 C2528.0,954.2 2520.8,956.0 2516.1,963.2 C2511.3,971.5 2512.5,981.0 2518.4,982.2 C2524.4,982.8 2531.5,970.3 2533.9,959.0 M2533.7,956.0 C2533.3,966.7 2535.1,977.5 2538.7,984.0 M2544.7,943.5 C2547.7,945.9 2551.2,947.1 2555.4,947.1 M2549.4,955.4 C2549.4,965.6 2549.8,973.9 2551.5,979.2 C2552.7,982.5 2554.8,981.6 2556.2,977.5 M2564.3,955.4 C2564.9,964.4 2564.3,975.1 2563.7,984.0 M2564.3,970.3 C2568.4,960.8 2574.4,954.8 2577.4,956.3 C2580.9,958.4 2581.5,972.7 2583.9,985.2"/><path transform="translate(-0.64,0.64)" d="M1356.7,892.8 C1360.9,876.1 1365.6,858.3 1369.8,842.8 C1374.5,859.5 1379.3,877.3 1384.1,893.4 M1362.0,874.7 L1378.1,872.0 M1363.8,878.5 C1370.4,880.9 1376.9,885.7 1381.7,890.2 M1426.9,844.0 C1425.7,858.3 1425.9,876.1 1427.5,886.3 C1428.3,891.6 1431.0,892.2 1433.1,887.8 M1438.8,852.9 C1441.8,855.3 1445.3,856.5 1449.5,856.5 M1443.5,864.8 C1443.5,875.0 1443.9,883.3 1445.6,888.6 C1446.8,891.9 1448.9,891.0 1450.3,886.9 M1479.9,868.4 C1475.2,863.0 1466.8,864.2 1462.1,872.6 C1457.3,882.1 1462.1,888.0 1468.0,885.7 C1472.8,883.3 1477.5,876.1 1479.9,868.4 M1480.5,866.0 C1480.5,879.7 1481.1,891.6 1478.1,900.5 C1475.2,907.7 1464.4,905.3 1458.5,897.0 M1493.6,844.0 C1493.0,858.3 1491.8,876.1 1490.8,892.6 M1491.5,878.5 C1495.3,870.2 1501.3,864.2 1504.3,866.0 C1507.8,868.4 1508.4,882.1 1511.4,894.0 M1529.3,855.3 C1529.1,867.8 1528.7,882.1 1530.5,888.6 C1532.3,892.8 1537.6,890.4 1540.6,886.3 M1518.0,866.9 L1540.0,866.0 M1549.2,866.0 C1550.7,875.0 1552.5,884.5 1554.5,893.0 C1557.2,885.7 1560.2,879.1 1563.2,872.6 C1565.0,879.7 1566.7,886.9 1568.3,893.6 C1570.3,884.5 1572.3,875.0 1573.9,864.8 M1577.7,882.7 C1588.2,882.1 1602.5,878.5 1606.7,872.6 C1609.0,867.2 1600.1,863.0 1594.2,866.0 C1587.0,870.2 1582.3,882.1 1587.0,890.4 C1591.8,896.4 1604.9,892.8 1611.8,883.9 M1615.0,852.9 C1618.0,855.3 1621.5,856.5 1625.7,856.5 M1619.7,864.8 C1619.7,875.0 1620.1,883.3 1621.8,888.6 C1623.0,891.9 1625.1,891.0 1626.5,886.9 M1655.1,868.4 C1650.4,863.0 1642.0,864.2 1637.3,872.6 C1632.5,882.1 1637.3,888.0 1643.2,885.7 C1648.0,883.3 1652.7,876.1 1655.1,868.4 M1655.7,866.0 C1655.7,879.7 1656.3,891.6 1653.3,900.5 C1650.4,907.7 1639.6,905.3 1633.7,897.0 M1668.9,844.0 C1668.3,858.3 1667.1,876.1 1666.1,892.6 M1666.8,878.5 C1670.6,870.2 1676.6,864.2 1679.6,866.0 C1683.1,868.4 1683.7,882.1 1686.7,894.0 M1704.5,855.3 C1704.3,867.8 1703.9,882.1 1705.7,888.6 C1707.5,892.8 1712.8,890.4 1715.8,886.3 M1693.2,866.9 L1715.2,866.0 M1756.3,844.0 C1755.1,858.3 1755.3,876.1 1756.9,886.3 C1757.7,891.6 1760.4,892.2 1762.5,887.8 M1775.9,864.2 C1770.6,870.2 1768.2,882.1 1771.8,889.2 C1775.3,895.2 1784.9,892.8 1787.8,882.1 C1790.2,872.6 1786.0,864.2 1778.3,865.4 C1776.5,865.4 1775.3,866.0 1774.1,867.2 M1822.4,871.4 C1818.8,865.4 1812.9,863.6 1808.1,867.8 C1802.2,873.8 1801.0,886.9 1808.1,892.2 C1814.1,895.8 1821.2,891.6 1824.2,885.1 M1850.9,867.2 C1846.2,863.6 1839.0,865.4 1834.3,872.6 C1829.5,880.9 1830.7,890.4 1836.6,891.6 C1842.6,892.2 1849.7,879.7 1852.1,868.4 M1851.9,865.4 C1851.5,876.1 1853.3,886.9 1856.9,893.4 M1868.3,844.0 C1867.1,858.3 1867.3,876.1 1868.9,886.3 C1869.7,891.6 1872.4,892.2 1874.5,887.8 M1878.1,868.0 C1886.7,869.6 1896.2,870.2 1905.2,870.8 M1932.9,850.0 C1931.1,844.0 1923.4,841.6 1920.4,850.0 C1919.2,858.3 1919.2,882.1 1919.8,905.9 M1909.3,868.8 L1933.5,866.4 M1940.6,852.9 C1943.6,855.3 1947.1,856.5 1951.3,856.5 M1945.3,864.8 C1945.3,875.0 1945.7,883.3 1947.4,888.6 C1948.6,891.9 1950.7,891.0 1952.1,886.9 M1960.0,865.4 C1960.9,875.0 1961.5,884.5 1962.1,893.0 M1962.1,878.5 C1965.0,870.2 1969.8,864.8 1974.6,866.0 C1978.1,866.9 1980.5,869.0 1983.1,870.8 M2007.2,868.4 C2003.1,864.2 1995.9,863.6 1992.9,869.0 C1990.6,875.0 2005.4,876.1 2007.8,883.3 C2009.0,890.4 1997.1,896.4 1986.6,886.3 M2026.9,855.3 C2026.7,867.8 2026.3,882.1 2028.1,888.6 C2029.9,892.8 2035.2,890.4 2038.2,886.3 M2015.6,866.9 L2037.6,866.0 M2094.7,868.4 C2090.0,863.0 2081.6,864.2 2076.9,872.6 C2072.1,882.1 2076.9,888.0 2082.8,885.7 C2087.6,883.3 2092.3,876.1 2094.7,868.4 M2095.3,866.0 C2095.3,879.7 2095.9,891.6 2092.9,900.5 C2090.0,907.7 2079.2,905.3 2073.3,897.0 M2103.3,865.4 C2104.2,875.0 2104.8,884.5 2105.4,893.0 M2105.4,878.5 C2108.3,870.2 2113.1,864.8 2117.9,866.0 C2121.4,866.9 2123.8,869.0 2126.4,870.8 M2153.6,867.2 C2148.9,863.6 2141.7,865.4 2137.0,872.6 C2132.2,880.9 2133.4,890.4 2139.3,891.6 C2145.3,892.2 2152.4,879.7 2154.8,868.4 M2154.6,865.4 C2154.2,876.1 2156.0,886.9 2159.6,893.4 M2166.7,862.5 C2166.4,876.1 2166.4,891.6 2166.7,905.9 M2166.7,864.2 C2175.0,866.0 2185.7,870.2 2186.9,876.1 C2185.7,882.1 2175.0,886.9 2164.1,888.0 M2198.3,844.0 C2197.7,858.3 2196.5,876.1 2195.5,892.6 M2196.2,878.5 C2200.0,870.2 2206.0,864.2 2209.0,866.0 C2212.5,868.4 2213.1,882.1 2216.1,894.0 M2223.2,852.9 C2226.2,855.3 2229.7,856.5 2233.9,856.5 M2227.9,864.8 C2227.9,875.0 2228.3,883.3 2230.0,888.6 C2231.2,891.9 2233.3,891.0 2234.7,886.9 M2264.9,871.4 C2261.3,865.4 2255.4,863.6 2250.6,867.8 C2244.7,873.8 2243.5,886.9 2250.6,892.2 C2256.6,895.8 2263.7,891.6 2266.7,885.1 M2273.5,868.0 C2282.1,869.6 2291.6,870.2 2300.6,870.8 M2326.2,871.4 C2322.6,865.4 2316.7,863.6 2311.9,867.8 C2306.0,873.8 2304.8,886.9 2311.9,892.2 C2317.9,895.8 2325.0,891.6 2328.0,885.1 M2335.3,882.7 C2345.8,882.1 2360.1,878.5 2364.3,872.6 C2366.6,867.2 2357.7,863.0 2351.8,866.0 C2344.6,870.2 2339.9,882.1 2344.6,890.4 C2349.4,896.4 2362.5,892.8 2369.4,883.9 M2374.4,864.8 C2375.0,873.8 2374.4,884.5 2373.8,893.4 M2374.4,879.7 C2378.5,870.2 2384.5,864.2 2387.5,865.7 C2391.0,867.8 2391.6,882.1 2394.0,894.6 M2410.6,855.3 C2410.4,867.8 2410.0,882.1 2411.8,888.6 C2413.6,892.8 2418.9,890.4 2421.9,886.3 M2399.3,866.9 L2421.3,866.0 M2428.1,865.4 C2429.0,875.0 2429.6,884.5 2430.2,893.0 M2430.2,878.5 C2433.1,870.2 2437.9,864.8 2442.7,866.0 C2446.2,866.9 2448.6,869.0 2451.2,870.8 M2455.0,852.9 C2458.0,855.3 2461.5,856.5 2465.7,856.5 M2459.7,864.8 C2459.7,875.0 2460.1,883.3 2461.8,888.6 C2463.0,891.9 2465.1,891.0 2466.5,886.9 M2496.1,871.4 C2492.5,865.4 2486.6,863.6 2481.8,867.8 C2475.9,873.8 2474.7,886.9 2481.8,892.2 C2487.8,895.8 2494.9,891.6 2497.9,885.1 M1357.9,953.1 C1357.6,966.7 1357.6,982.2 1357.9,996.5 M1357.9,954.8 C1366.2,956.6 1376.9,960.8 1378.1,966.7 C1376.9,972.7 1366.2,977.5 1355.3,978.6 M1385.0,956.0 C1385.9,965.6 1386.5,975.1 1387.1,983.6 M1387.1,969.1 C1390.0,960.8 1394.8,955.4 1399.6,956.6 C1403.1,957.5 1405.5,959.6 1408.1,961.4 M1420.3,954.8 C1415.0,960.8 1412.6,972.7 1416.2,979.8 C1419.7,985.8 1429.3,983.4 1432.2,972.7 C1434.6,963.2 1430.4,954.8 1422.7,956.0 C1420.9,956.0 1419.7,956.6 1418.5,957.8 M1465.0,957.2 C1460.2,953.6 1451.9,955.4 1447.2,962.6 C1442.4,970.9 1443.6,981.0 1450.1,982.2 C1456.1,982.2 1463.8,970.3 1466.2,958.4 M1468.6,934.0 C1467.4,948.9 1465.6,966.7 1466.8,975.1 C1467.4,979.8 1468.6,982.8 1469.5,984.6 M1477.5,954.8 C1476.9,966.7 1477.5,979.8 1482.2,982.2 C1487.0,983.4 1493.0,972.7 1495.6,960.8 M1495.9,954.8 C1495.6,965.6 1495.9,976.3 1496.8,984.6 M1525.7,962.0 C1522.1,956.0 1516.2,954.2 1511.4,958.4 C1505.5,964.4 1504.3,977.5 1511.4,982.8 C1517.4,986.4 1524.5,982.2 1527.5,975.7 M1545.4,945.9 C1545.2,958.4 1544.8,972.7 1546.6,979.2 C1548.4,983.4 1553.7,981.0 1556.7,976.9 M1534.1,957.5 L1556.1,956.6 M1561.4,943.5 C1564.4,945.9 1567.9,947.1 1572.1,947.1 M1566.1,955.4 C1566.1,965.6 1566.5,973.9 1568.2,979.2 C1569.4,982.5 1571.5,981.6 1572.9,977.5 M1578.7,954.8 C1581.7,964.4 1585.2,974.5 1588.8,983.6 C1593.0,973.9 1598.3,963.8 1603.4,954.2 M1607.9,943.5 C1610.9,945.9 1614.4,947.1 1618.6,947.1 M1612.6,955.4 C1612.6,965.6 1613.0,973.9 1614.7,979.2 C1615.9,982.5 1618.0,981.6 1619.4,977.5 M1637.2,945.9 C1637.0,958.4 1636.6,972.7 1638.4,979.2 C1640.2,983.4 1645.5,981.0 1648.5,976.9 M1625.9,957.5 L1647.9,956.6 M1656.7,954.5 C1657.4,962.0 1658.2,971.5 1661.1,975.6 C1663.6,977.5 1670.7,965.6 1675.5,956.6 M1676.9,954.7 C1676.7,966.7 1676.5,978.6 1674.0,987.2 C1671.9,993.5 1668.4,995.9 1664.4,995.6 C1660.0,994.7 1656.5,989.4 1652.8,984.5 M1725.5,945.9 C1725.3,958.4 1724.9,972.7 1726.7,979.2 C1728.5,983.4 1733.8,981.0 1736.8,976.9 M1714.2,957.5 L1736.2,956.6 M1748.7,954.8 C1743.4,960.8 1741.0,972.7 1744.6,979.8 C1748.1,985.8 1757.7,983.4 1760.6,972.7 C1763.0,963.2 1758.8,954.8 1751.1,956.0 C1749.3,956.0 1748.1,956.6 1746.9,957.8 M1777.8,954.8 C1772.5,960.8 1770.1,972.7 1773.7,979.8 C1777.2,985.8 1786.8,983.4 1789.7,972.7 C1792.1,963.2 1787.9,954.8 1780.2,956.0 C1778.4,956.0 1777.2,956.6 1776.0,957.8 M1806.5,934.6 C1805.3,948.9 1805.5,966.7 1807.1,976.9 C1807.9,982.2 1810.6,982.8 1812.7,978.4 M1858.2,945.9 C1858.0,958.4 1857.6,972.7 1859.4,979.2 C1861.2,983.4 1866.5,981.0 1869.5,976.9 M1846.9,957.5 L1868.9,956.6 M1882.6,954.8 C1877.3,960.8 1874.9,972.7 1878.5,979.8 C1882.0,985.8 1891.6,983.4 1894.5,972.7 C1896.9,963.2 1892.7,954.8 1885.0,956.0 C1883.2,956.0 1882.0,956.6 1880.8,957.8 M1938.7,934.0 C1937.5,948.9 1936.3,966.7 1935.7,983.2 M1937.5,960.8 C1945.2,962.0 1955.9,964.4 1957.1,969.1 C1955.9,976.3 1945.2,982.2 1935.9,983.6 M1965.5,954.8 C1964.9,966.7 1965.5,979.8 1970.2,982.2 C1975.0,983.4 1981.0,972.7 1983.6,960.8 M1983.9,954.8 C1983.6,965.6 1983.9,976.3 1984.8,984.6 M1992.9,943.5 C1995.9,945.9 1999.4,947.1 2003.6,947.1 M1997.6,955.4 C1997.6,965.6 1998.0,973.9 1999.7,979.2 C2000.9,982.5 2003.0,981.6 2004.4,977.5 M2016.7,934.6 C2015.5,948.9 2015.7,966.7 2017.3,976.9 C2018.1,982.2 2020.8,982.8 2022.9,978.4 M2051.2,957.2 C2046.4,953.6 2038.1,955.4 2033.4,962.6 C2028.6,970.9 2029.8,981.0 2036.3,982.2 C2042.3,982.2 2050.0,970.3 2052.4,958.4 M2054.8,934.0 C2053.6,948.9 2051.8,966.7 2053.0,975.1 C2053.6,979.8 2054.8,982.8 2055.7,984.6 M2094.3,954.5 C2095.0,962.0 2095.8,971.5 2098.7,975.6 C2101.2,977.5 2108.3,965.6 2113.1,956.6 M2114.5,954.7 C2114.3,966.7 2114.1,978.6 2111.6,987.2 C2109.5,993.5 2106.0,995.9 2102.0,995.6 C2097.6,994.7 2094.1,989.4 2090.4,984.5 M2130.3,954.8 C2125.0,960.8 2122.6,972.7 2126.2,979.8 C2129.7,985.8 2139.3,983.4 2142.2,972.7 C2144.6,963.2 2140.4,954.8 2132.7,956.0 C2130.9,956.0 2129.7,956.6 2128.5,957.8 M2152.4,954.8 C2151.8,966.7 2152.4,979.8 2157.1,982.2 C2161.9,983.4 2167.9,972.7 2170.5,960.8 M2170.8,954.8 C2170.5,965.6 2170.8,976.3 2171.7,984.6 M2179.8,956.0 C2180.7,965.6 2181.3,975.1 2181.9,983.6 M2181.9,969.1 C2184.8,960.8 2189.6,955.4 2194.4,956.6 C2197.9,957.5 2200.3,959.6 2202.9,961.4 M2258.2,959.0 C2254.1,954.8 2246.9,954.2 2243.9,959.6 C2241.6,965.6 2256.4,966.7 2258.8,973.9 C2260.0,981.0 2248.1,987.0 2237.6,976.9 M2265.6,973.3 C2276.1,972.7 2290.4,969.1 2294.6,963.2 C2296.9,957.8 2288.0,953.6 2282.1,956.6 C2274.9,960.8 2270.2,972.7 2274.9,981.0 C2279.7,987.0 2292.8,983.4 2299.7,974.5 M2324.3,962.0 C2320.7,956.0 2314.8,954.2 2310.0,958.4 C2304.1,964.4 2302.9,977.5 2310.0,982.8 C2316.0,986.4 2323.1,982.2 2326.1,975.7 M2341.5,954.8 C2336.2,960.8 2333.8,972.7 2337.4,979.8 C2340.9,985.8 2350.5,983.4 2353.4,972.7 C2355.8,963.2 2351.6,954.8 2343.9,956.0 C2342.1,956.0 2340.9,956.6 2339.7,957.8 M2364.8,955.4 C2365.4,964.4 2364.8,975.1 2364.2,984.0 M2364.8,970.3 C2368.9,960.8 2374.9,954.8 2377.9,956.3 C2381.4,958.4 2382.0,972.7 2384.4,985.2 M2413.0,957.2 C2408.2,953.6 2399.9,955.4 2395.2,962.6 C2390.4,970.9 2391.6,981.0 2398.1,982.2 C2404.1,982.2 2411.8,970.3 2414.2,958.4 M2416.6,934.0 C2415.4,948.9 2413.6,966.7 2414.8,975.1 C2415.4,979.8 2416.6,982.8 2417.5,984.6 M2458.9,934.0 C2457.7,948.9 2456.5,966.7 2455.9,983.2 M2457.7,960.8 C2465.4,962.0 2476.1,964.4 2477.3,969.1 C2476.1,976.3 2465.4,982.2 2456.1,983.6 M2484.8,956.0 C2485.7,965.6 2486.3,975.1 2486.9,983.6 M2486.9,969.1 C2489.8,960.8 2494.6,955.4 2499.4,956.6 C2502.9,957.5 2505.3,959.6 2507.9,961.4 M2532.7,957.8 C2528.0,954.2 2520.8,956.0 2516.1,963.2 C2511.3,971.5 2512.5,981.0 2518.4,982.2 C2524.4,982.8 2531.5,970.3 2533.9,959.0 M2533.7,956.0 C2533.3,966.7 2535.1,977.5 2538.7,984.0 M2544.7,943.5 C2547.7,945.9 2551.2,947.1 2555.4,947.1 M2549.4,955.4 C2549.4,965.6 2549.8,973.9 2551.5,979.2 C2552.7,982.5 2554.8,981.6 2556.2,977.5 M2564.3,955.4 C2564.9,964.4 2564.3,975.1 2563.7,984.0 M2564.3,970.3 C2568.4,960.8 2574.4,954.8 2577.4,956.3 C2580.9,958.4 2581.5,972.7 2583.9,985.2"/></g><circle cx="2598" cy="984" r="4.3" fill="#1b1b1b"/><rect x="1291" y="523.2" width="1352" height="700.0" fill="none" stroke="#4f4bd3" stroke-width="2"/><rect x="1283" y="515.2" width="16" height="16" rx="4" fill="#fff" stroke="#4f4bd3" stroke-width="2"/><rect x="1959.0" y="515.2" width="16" height="16" rx="4" fill="#fff" stroke="#4f4bd3" stroke-width="2"/><rect x="2635" y="515.2" width="16" height="16" rx="4" fill="#fff" stroke="#4f4bd3" stroke-width="2"/><rect x="1283" y="865.2" width="16" height="16" rx="4" fill="#fff" stroke="#4f4bd3" stroke-width="2"/><rect x="2635" y="865.2" width="16" height="16" rx="4" fill="#fff" stroke="#4f4bd3" stroke-width="2"/><rect x="1283" y="1215.2" width="16" height="16" rx="4" fill="#fff" stroke="#4f4bd3" stroke-width="2"/><rect x="1959.0" y="1215.2" width="16" height="16" rx="4" fill="#fff" stroke="#4f4bd3" stroke-width="2"/><rect x="2635" y="1215.2" width="16" height="16" rx="4" fill="#fff" stroke="#4f4bd3" stroke-width="2"/><circle cx="1967.0" cy="491.700" r="7.800" fill="#fff" stroke="#4f4bd3" stroke-width="2"/></svg>
<svg class="a" style="left:690px;top:840px;" width="16" height="26" viewBox="690 840 16 26" fill="#4a586e" stroke="none" stroke-width="0" stroke-linecap="round" stroke-linejoin="round"><circle cx="695.2" cy="846.5" r="1.900"/><circle cx="695.2" cy="853" r="1.900"/><circle cx="695.2" cy="859.5" r="1.900"/><circle cx="700.8" cy="846.5" r="1.900"/><circle cx="700.8" cy="853" r="1.900"/><circle cx="700.8" cy="859.5" r="1.900"/></svg>
</div></div></body></html>
